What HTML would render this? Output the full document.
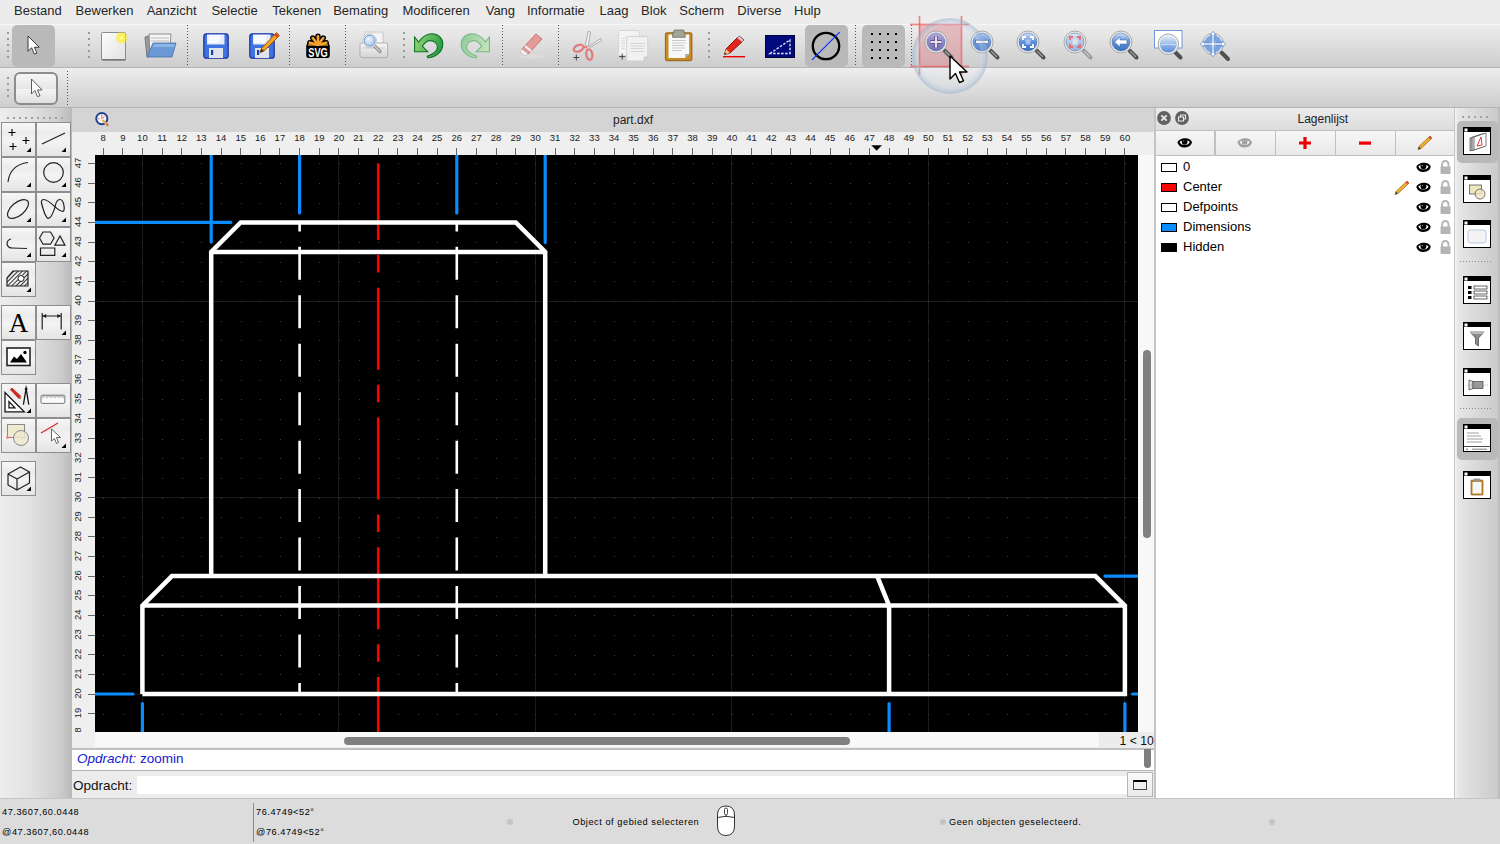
<!DOCTYPE html><html><head><meta charset="utf-8"><style>
html,body{margin:0;padding:0;width:1500px;height:844px;overflow:hidden;background:#ececec;font-family:"Liberation Sans", sans-serif;position:relative}
</style></head><body><div style="position:absolute;left:0px;top:0px;width:1500px;height:24px;background:#ececec"></div><div style="position:absolute;left:14px;top:4px;font-size:13px;line-height:13px;color:#262626;white-space:nowrap;">Bestand</div><div style="position:absolute;left:75.6px;top:4px;font-size:13px;line-height:13px;color:#262626;white-space:nowrap;">Bewerken</div><div style="position:absolute;left:146.7px;top:4px;font-size:13px;line-height:13px;color:#262626;white-space:nowrap;">Aanzicht</div><div style="position:absolute;left:211.4px;top:4px;font-size:13px;line-height:13px;color:#262626;white-space:nowrap;">Selectie</div><div style="position:absolute;left:272.2px;top:4px;font-size:13px;line-height:13px;color:#262626;white-space:nowrap;">Tekenen</div><div style="position:absolute;left:333.2px;top:4px;font-size:13px;line-height:13px;color:#262626;white-space:nowrap;">Bemating</div><div style="position:absolute;left:402.5px;top:4px;font-size:13px;line-height:13px;color:#262626;white-space:nowrap;">Modificeren</div><div style="position:absolute;left:485.7px;top:4px;font-size:13px;line-height:13px;color:#262626;white-space:nowrap;">Vang</div><div style="position:absolute;left:527px;top:4px;font-size:13px;line-height:13px;color:#262626;white-space:nowrap;">Informatie</div><div style="position:absolute;left:599.5px;top:4px;font-size:13px;line-height:13px;color:#262626;white-space:nowrap;">Laag</div><div style="position:absolute;left:641.1px;top:4px;font-size:13px;line-height:13px;color:#262626;white-space:nowrap;">Blok</div><div style="position:absolute;left:679.3px;top:4px;font-size:13px;line-height:13px;color:#262626;white-space:nowrap;">Scherm</div><div style="position:absolute;left:737.3px;top:4px;font-size:13px;line-height:13px;color:#262626;white-space:nowrap;">Diverse</div><div style="position:absolute;left:794px;top:4px;font-size:13px;line-height:13px;color:#262626;white-space:nowrap;">Hulp</div><div style="position:absolute;left:0px;top:24px;width:1500px;height:44px;background:linear-gradient(#ededed,#e2e2e2 35%,#cdcdcd);border-top:1px solid #f6f6f6;box-sizing:border-box;border-bottom:1px solid #b6b6b6"></div><div style="position:absolute;left:0px;top:68px;width:1500px;height:40px;background:linear-gradient(#eeeeee,#e2e2e2 35%,#cecece);box-sizing:border-box;border-bottom:1px solid #b4b4b4"></div><div style="position:absolute;left:7px;top:32px;width:2px;height:2px;background:#999"></div><div style="position:absolute;left:7px;top:38px;width:2px;height:2px;background:#999"></div><div style="position:absolute;left:7px;top:44px;width:2px;height:2px;background:#999"></div><div style="position:absolute;left:7px;top:50px;width:2px;height:2px;background:#999"></div><div style="position:absolute;left:7px;top:56px;width:2px;height:2px;background:#999"></div><div style="position:absolute;left:12px;top:25px;width:43px;height:42px;background:#b9b9b9;border-radius:5px"></div><svg style="position:absolute;left:27.5px;top:35.5px;overflow:visible" width="14" height="22" viewBox="0 0 14 22"><g transform="scale(0.9)"><path d="M0 0 L0 17 L4 13 L7 20 L10 19 L7 12.5 L12.5 12.5 Z" fill="#fff" stroke="#3a3a3a" stroke-width="1.1" stroke-linejoin="round"/></g></svg><div style="position:absolute;left:88px;top:32px;width:2px;height:2px;background:#999"></div><div style="position:absolute;left:88px;top:38px;width:2px;height:2px;background:#999"></div><div style="position:absolute;left:88px;top:44px;width:2px;height:2px;background:#999"></div><div style="position:absolute;left:88px;top:50px;width:2px;height:2px;background:#999"></div><div style="position:absolute;left:88px;top:56px;width:2px;height:2px;background:#999"></div><svg style="position:absolute;left:100px;top:31px;overflow:visible" width="28" height="30" viewBox="0 0 28 30"><defs><linearGradient id="nd" x1="0" y1="0" x2="1" y2="1"><stop offset="0" stop-color="#fdfdfd"/><stop offset="1" stop-color="#e2e2e2"/></linearGradient><radialGradient id="glow"><stop offset="0" stop-color="#ffffe0"/><stop offset="0.35" stop-color="#fff23a"/><stop offset="1" stop-color="#f5e800" stop-opacity="0"/></radialGradient></defs><rect x="1.5" y="1.5" width="24" height="27.5" rx="1" fill="url(#nd)" stroke="#8c8c8c" stroke-width="1"/><rect x="2" y="28" width="23.5" height="1.5" fill="#777"/><circle cx="21.7" cy="6.7" r="7" fill="url(#glow)"/></svg><svg style="position:absolute;left:143px;top:31px;overflow:visible" width="34" height="28" viewBox="0 0 34 28"><path d="M2 6 L9 4 L10 24 L4 26 Z" fill="#9a9a9a" stroke="#666" stroke-width="0.8"/><path d="M6 3 L28 3 L27 16 L7 22 Z" fill="#f4f4f4" stroke="#777" stroke-width="0.8"/><path d="M8 7 L26 7 M8 10 L26 10" stroke="#bbb" stroke-width="1"/><path d="M10 12 L33 12 L29 26 L4 26 Z" fill="#6b98d6" stroke="#4a70a8" stroke-width="0.8"/><path d="M11 13 L32 13 L31 16 L10 16 Z" fill="#8db4e6"/></svg><div style="position:absolute;left:187px;top:25px;width:1px;height:41px;background:repeating-linear-gradient(#555 0 1px,transparent 1px 3px)"></div><svg style="position:absolute;left:202.5px;top:32.5px;overflow:visible" width="26" height="26" viewBox="0 0 26 26"><rect x="0.8" y="0.8" width="24.4" height="24.4" rx="2.5" fill="#3e73e0" stroke="#1d2f9e" stroke-width="1.2"/><rect x="4" y="1.5" width="17.5" height="10" fill="#e4ecfb"/><path d="M6 2 L18 2 L16 10 L5 10 Z" fill="#f7f9ff"/><rect x="6" y="15" width="14" height="10" fill="#dfe3ea"/><rect x="8" y="17" width="2.2" height="5" fill="#1d3fb0"/></svg><svg style="position:absolute;left:248.5px;top:32.5px;overflow:visible" width="26" height="26" viewBox="0 0 26 26"><rect x="0.8" y="0.8" width="24.4" height="24.4" rx="2.5" fill="#3e73e0" stroke="#1d2f9e" stroke-width="1.2"/><rect x="4" y="1.5" width="17.5" height="10" fill="#e4ecfb"/><path d="M6 2 L18 2 L16 10 L5 10 Z" fill="#f7f9ff"/><rect x="6" y="15" width="14" height="10" fill="#dfe3ea"/><rect x="8" y="17" width="2.2" height="5" fill="#1d3fb0"/></svg><svg style="position:absolute;left:256px;top:30px;overflow:visible" width="24" height="26" viewBox="0 0 24 26"><path d="M20.5 2.5 L23.5 5.5 L8 21 L4 22.5 L5.5 18.5 Z" fill="#f2a51e" stroke="#a5530a" stroke-width="1"/><path d="M19 4 L22 7" stroke="#e0402a" stroke-width="2.5"/><path d="M4 22.5 L5.5 18.5 L8 21 Z" fill="#333"/></svg><div style="position:absolute;left:289px;top:25px;width:1px;height:41px;background:repeating-linear-gradient(#555 0 1px,transparent 1px 3px)"></div><svg style="position:absolute;left:306px;top:33px;overflow:visible" width="24" height="26" viewBox="0 0 24 26"><g stroke="#000" stroke-width="5.4" stroke-linecap="round"><path d="M12 11.7 L12 3.2" transform="rotate(-76 12 11.7)"/><path d="M12 11.7 L12 3.2" transform="rotate(-38 12 11.7)"/><path d="M12 11.7 L12 3.2" transform="rotate(0 12 11.7)"/><path d="M12 11.7 L12 3.2" transform="rotate(38 12 11.7)"/><path d="M12 11.7 L12 3.2" transform="rotate(76 12 11.7)"/></g><rect x="0.2" y="10.3" width="23.6" height="14.8" rx="3.2" fill="#000"/><g stroke="#f7a52b" stroke-width="2.6" stroke-linecap="round"><path d="M12 11.7 L12 3.2" transform="rotate(-76 12 11.7)"/><path d="M12 11.7 L12 3.2" transform="rotate(-38 12 11.7)"/><path d="M12 11.7 L12 3.2" transform="rotate(0 12 11.7)"/><path d="M12 11.7 L12 3.2" transform="rotate(38 12 11.7)"/><path d="M12 11.7 L12 3.2" transform="rotate(76 12 11.7)"/></g><rect x="2" y="11.3" width="20" height="1.3" fill="#f7a52b"/><text transform="translate(12 23.8) scale(0.7 1)" text-anchor="middle" font-family="Liberation Sans" font-weight="bold" font-size="13.2" fill="#fff">SVG</text></svg><div style="position:absolute;left:345px;top:25px;width:1px;height:41px;background:repeating-linear-gradient(#555 0 1px,transparent 1px 3px)"></div><svg style="position:absolute;left:359px;top:31px;overflow:visible" width="31" height="29" viewBox="0 0 31 29"><defs><linearGradient id="pb" x1="0" y1="0" x2="0" y2="1"><stop offset="0" stop-color="#f8f8f8"/><stop offset="1" stop-color="#d2d2d2"/></linearGradient><radialGradient id="pl" cx="0.4" cy="0.35" r="0.7"><stop offset="0" stop-color="#f2f6fc"/><stop offset="1" stop-color="#a7c3e8"/></radialGradient></defs><rect x="5.7" y="1" width="18.6" height="14" rx="1" fill="#ececec" stroke="#c8c8c8" stroke-width="0.8"/><rect x="10" y="3" width="12" height="10" fill="#f6f6f6"/><path d="M1 14 Q1 12 3 12 L26.7 12 Q28.7 12 28.7 14 L28.7 24.5 Q28.7 26.7 26.5 26.7 L3.2 26.7 Q1 26.7 1 24.5 Z" fill="url(#pb)" stroke="#a8a8a8" stroke-width="0.9"/><path d="M3 17 H26" stroke="#c4c4c4" stroke-width="0.8"/><path d="M14.5 14 L21 20.5" stroke="#8a8a8a" stroke-width="3.2" stroke-linecap="round"/><path d="M14.5 14 L21 20.5" stroke="#d0d0d0" stroke-width="1.2" stroke-linecap="round"/><circle cx="10.7" cy="9.7" r="6.8" fill="#f4f4f4" stroke="#c0c0c0" stroke-width="0.8"/><circle cx="10.7" cy="9.7" r="5.4" fill="url(#pl)" stroke="#5c8fd0" stroke-width="0.9"/></svg><div style="position:absolute;left:403px;top:32px;width:2px;height:2px;background:#999"></div><div style="position:absolute;left:403px;top:38px;width:2px;height:2px;background:#999"></div><div style="position:absolute;left:403px;top:44px;width:2px;height:2px;background:#999"></div><div style="position:absolute;left:403px;top:50px;width:2px;height:2px;background:#999"></div><div style="position:absolute;left:403px;top:56px;width:2px;height:2px;background:#999"></div><svg style="position:absolute;left:413px;top:32px;overflow:visible" width="32" height="28" viewBox="0 0 32 28"><defs><linearGradient id="ug" x1="0" y1="0" x2="1" y2="0.3"><stop offset="0" stop-color="#9bd97a"/><stop offset="1" stop-color="#2f9e45"/></linearGradient></defs><path d="M1.6 5 L5.5 10.1 C9 5 14 1.7 19 1.7 C25 1.7 29.8 6 29.8 12.2 C29.8 20 22 25.7 14.8 25.7 L14.2 24.2 C20 22 24.4 18.5 24.4 15.2 C24.4 11 21 8.6 17.2 8.6 C14 8.6 11.5 11 9.4 14.3 L14.8 19.7 L1.6 19.7 Z" fill="url(#ug)" stroke="#0b7326" stroke-width="1.1" stroke-linejoin="miter"/></svg><svg style="position:absolute;left:460px;top:32px;overflow:visible" width="32" height="28" viewBox="0 0 32 28"><defs><linearGradient id="rg" x1="1" y1="0" x2="0" y2="0.3"><stop offset="0" stop-color="#8dca97"/><stop offset="1" stop-color="#c2e4b9"/></linearGradient></defs><g transform="translate(31 0) scale(-1 1)"><path d="M1.6 5 L5.5 10.1 C9 5 14 1.7 19 1.7 C25 1.7 29.8 6 29.8 12.2 C29.8 20 22 25.7 14.8 25.7 L14.2 24.2 C20 22 24.4 18.5 24.4 15.2 C24.4 11 21 8.6 17.2 8.6 C14 8.6 11.5 11 9.4 14.3 L14.8 19.7 L1.6 19.7 Z" fill="url(#rg)" stroke="#79b886" stroke-width="1.1"/></g></svg><div style="position:absolute;left:502px;top:25px;width:1px;height:41px;background:repeating-linear-gradient(#555 0 1px,transparent 1px 3px)"></div><svg style="position:absolute;left:516px;top:32px;overflow:visible" width="30" height="28" viewBox="0 0 30 28"><ellipse cx="16" cy="24.5" rx="12" ry="1.8" fill="#ddd"/><path d="M20 2 L26 7 L12 22 L6 17 Z" fill="#e59a9a" stroke="#c96f6f" stroke-width="1"/><path d="M9 14 L15 19" stroke="#f5f5f5" stroke-width="2"/><path d="M6 17 L12 22 L9 24 L4 20 Z" fill="#f3f3f3" stroke="#bbb" stroke-width="0.8"/></svg><div style="position:absolute;left:558px;top:25px;width:1px;height:41px;background:repeating-linear-gradient(#555 0 1px,transparent 1px 3px)"></div><svg style="position:absolute;left:572px;top:30px;overflow:visible" width="30" height="31" viewBox="0 0 30 31"><path d="M13.2 15.5 L16.2 1.5 L18.6 2 L16 16.5 Z" fill="#f4f4f4" stroke="#9a9a9a" stroke-width="0.8"/><path d="M16.5 16.5 L28.8 8.5 L29.4 10.8 L17.5 17.5 Z" fill="#f4f4f4" stroke="#9a9a9a" stroke-width="0.8"/><ellipse cx="6.6" cy="18.2" rx="5" ry="3.1" transform="rotate(-22 6.6 18.2)" fill="none" stroke="#e27c7c" stroke-width="2.3"/><path d="M11 16.8 L15 17.5" stroke="#e27c7c" stroke-width="2.2"/><ellipse cx="17.3" cy="24.6" rx="3" ry="5.2" transform="rotate(-8 17.3 24.6)" fill="none" stroke="#e27c7c" stroke-width="2.3"/><path d="M1.3 27.5 H7.3 M4.3 24.5 V30.5" stroke="#444" stroke-width="1"/></svg><svg style="position:absolute;left:617px;top:30px;overflow:visible" width="33" height="33" viewBox="0 0 33 33"><rect x="1.6" y="0.5" width="20.7" height="25.2" rx="1.2" fill="#f3f3f3" stroke="#d2d2d2" stroke-width="0.9"/><path d="M4.5 8.5 H8 M4.5 11 H8 M4.5 13.5 H8 M4.5 16 H8 M4.5 18.5 H8" stroke="#dadada" stroke-width="1"/><path d="M11 6.4 H29.5 Q30.8 6.4 30.8 7.8 V27 L27 31 H11 Q9.7 31 9.7 29.6 V7.8 Q9.7 6.4 11 6.4 Z" fill="#f1f1f1" stroke="#cdcdcd" stroke-width="0.9"/><path d="M27 31 V27.5 Q27 27 27.5 27 H30.8 Z" fill="#d8d8d8" stroke="#bdbdbd" stroke-width="0.6"/><path d="M13.5 13.5 H28 M13.5 16 H28 M13.5 18.5 H27 M13.5 21.5 H28" stroke="#d6d6d6" stroke-width="1"/><path d="M2.2 26.6 H8.2 M5.2 23.6 V29.6" stroke="#444" stroke-width="1"/></svg><svg style="position:absolute;left:664px;top:29px;overflow:visible" width="30" height="33" viewBox="0 0 30 33"><rect x="1.4" y="3.8" width="26.5" height="27.9" rx="1.3" fill="#c88a22" stroke="#8a5a10" stroke-width="0.9"/><path d="M4.5 5.5 H25.2 V25 L21.2 29 H4.5 Z" fill="#f8f8f8"/><path d="M21.2 29 V25.5 Q21.2 25 21.7 25 H25.2 Z" fill="#a8a8a8"/><path d="M8 11.5 H21.5 M8 14 H21.5 M8 16.5 H20 M8 19 H21.5 M8 21.5 H18" stroke="#c8c8c8" stroke-width="1"/><path d="M10.8 1 H19 Q20.2 1 20.2 2.2 V4 H21.2 V8.3 H8.6 V4 H9.6 V2.2 Q9.6 1 10.8 1 Z" fill="#a3a396" stroke="#6e6e64" stroke-width="0.8"/></svg><div style="position:absolute;left:708px;top:32px;width:2px;height:2px;background:#999"></div><div style="position:absolute;left:708px;top:38px;width:2px;height:2px;background:#999"></div><div style="position:absolute;left:708px;top:44px;width:2px;height:2px;background:#999"></div><div style="position:absolute;left:708px;top:50px;width:2px;height:2px;background:#999"></div><div style="position:absolute;left:708px;top:56px;width:2px;height:2px;background:#999"></div><svg style="position:absolute;left:722px;top:33px;overflow:visible" width="25" height="26" viewBox="0 0 25 26"><path d="M17 3 L22 7 L8 20 L2.5 21.5 L4 16 Z" fill="#e3261b" stroke="#8c0f0a" stroke-width="1"/><path d="M16 4 L21 8" stroke="#ccc" stroke-width="2.6"/><path d="M2.5 21.5 L4 16 L8 20 Z" fill="#f0c896"/><path d="M2.5 21.5 L3 19.5 L4.5 21 Z" fill="#222"/><rect x="1" y="23" width="22" height="1.4" fill="#e80000"/></svg><svg style="position:absolute;left:765px;top:35px;overflow:visible" width="30" height="23" viewBox="0 0 30 23"><rect x="0.5" y="0.5" width="29" height="22" fill="#000a7d" stroke="#00043c" stroke-width="1"/><path d="M5 18.5 L25 5 L25 18.5 Z" fill="none" stroke="#e8e8ff" stroke-width="1.3" stroke-dasharray="2.5 1.5"/></svg><div style="position:absolute;left:805px;top:25px;width:43px;height:42px;background:#b9b9b9;border-radius:5px"></div><svg style="position:absolute;left:810px;top:29px;overflow:visible" width="32" height="32" viewBox="0 0 32 32"><circle cx="16" cy="17" r="13.2" fill="none" stroke="#000" stroke-width="2.3"/><path d="M2 30.9 L29.7 3.1" stroke="#1030ff" stroke-width="1.2"/></svg><div style="position:absolute;left:855px;top:25px;width:1px;height:41px;background:repeating-linear-gradient(#555 0 1px,transparent 1px 3px)"></div><div style="position:absolute;left:862px;top:25px;width:43px;height:42px;background:#b9b9b9;border-radius:5px"></div><div style="position:absolute;left:870.5px;top:32.7px;width:2px;height:2px;background:#000"></div><div style="position:absolute;left:878.5px;top:32.7px;width:2px;height:2px;background:#000"></div><div style="position:absolute;left:886.5px;top:32.7px;width:2px;height:2px;background:#000"></div><div style="position:absolute;left:894.5px;top:32.7px;width:2px;height:2px;background:#000"></div><div style="position:absolute;left:870.5px;top:40.7px;width:2px;height:2px;background:#000"></div><div style="position:absolute;left:878.5px;top:40.7px;width:2px;height:2px;background:#000"></div><div style="position:absolute;left:886.5px;top:40.7px;width:2px;height:2px;background:#000"></div><div style="position:absolute;left:894.5px;top:40.7px;width:2px;height:2px;background:#000"></div><div style="position:absolute;left:870.5px;top:48.7px;width:2px;height:2px;background:#000"></div><div style="position:absolute;left:878.5px;top:48.7px;width:2px;height:2px;background:#000"></div><div style="position:absolute;left:886.5px;top:48.7px;width:2px;height:2px;background:#000"></div><div style="position:absolute;left:894.5px;top:48.7px;width:2px;height:2px;background:#000"></div><div style="position:absolute;left:870.5px;top:56.7px;width:2px;height:2px;background:#000"></div><div style="position:absolute;left:878.5px;top:56.7px;width:2px;height:2px;background:#000"></div><div style="position:absolute;left:886.5px;top:56.7px;width:2px;height:2px;background:#000"></div><div style="position:absolute;left:894.5px;top:56.7px;width:2px;height:2px;background:#000"></div><div style="position:absolute;left:911px;top:25px;width:1px;height:41px;background:repeating-linear-gradient(#555 0 1px,transparent 1px 3px)"></div><div style="position:absolute;left:919px;top:24.5px;width:42px;height:42px;background:rgba(230,120,125,0.42)"></div><svg style="position:absolute;left:923px;top:28.5px;overflow:visible" width="34" height="34" viewBox="0 0 34 34"><defs><linearGradient id="lg936" x1="0" y1="0" x2="0" y2="1"><stop offset="0" stop-color="#b3a8dc"/><stop offset="0.5" stop-color="#8a80c4"/><stop offset="1" stop-color="#6f68b0"/></linearGradient></defs><path d="M21.5 21.5 L28.5 28.5" stroke="#505050" stroke-width="4" stroke-linecap="round"/><path d="M22.5 22.5 L27.5 27.5" stroke="#a0a0a0" stroke-width="1.2" stroke-linecap="round"/><circle cx="13" cy="13" r="11" fill="#ececec" stroke="#a0a0a0" stroke-width="0.9"/><circle cx="13" cy="13" r="9" fill="url(#lg936)" stroke="#4a6a9a" stroke-width="0.5"/><g transform="translate(1 1)"><path d="M12 6.5 V17.5 M6.5 12 H17.5" stroke="#3a3a80" stroke-width="3.6"/><path d="M12 6.5 V17.5 M6.5 12 H17.5" stroke="#f6dde6" stroke-width="2.2"/></g></svg><svg style="position:absolute;left:969px;top:28.5px;overflow:visible" width="34" height="34" viewBox="0 0 34 34"><defs><linearGradient id="lg982" x1="0" y1="0" x2="0" y2="1"><stop offset="0" stop-color="#a9c8f0"/><stop offset="0.5" stop-color="#6b9be0"/><stop offset="1" stop-color="#4c80d0"/></linearGradient></defs><path d="M21.5 21.5 L28.5 28.5" stroke="#505050" stroke-width="4" stroke-linecap="round"/><path d="M22.5 22.5 L27.5 27.5" stroke="#a0a0a0" stroke-width="1.2" stroke-linecap="round"/><circle cx="13" cy="13" r="11" fill="#ececec" stroke="#a0a0a0" stroke-width="0.9"/><circle cx="13" cy="13" r="9" fill="url(#lg982)" stroke="#4a6a9a" stroke-width="0.5"/><g transform="translate(1 1)"><rect x="5.5" y="10.2" width="13" height="3.4" fill="#fff" stroke="#3a5f98" stroke-width="0.7"/></g></svg><svg style="position:absolute;left:1015px;top:28.5px;overflow:visible" width="34" height="34" viewBox="0 0 34 34"><defs><linearGradient id="lg1028" x1="0" y1="0" x2="0" y2="1"><stop offset="0" stop-color="#cfe0f7"/><stop offset="0.5" stop-color="#5d8fd8"/><stop offset="1" stop-color="#3a6fc0"/></linearGradient></defs><path d="M21.5 21.5 L28.5 28.5" stroke="#505050" stroke-width="4" stroke-linecap="round"/><path d="M22.5 22.5 L27.5 27.5" stroke="#a0a0a0" stroke-width="1.2" stroke-linecap="round"/><circle cx="13" cy="13" r="11" fill="#ececec" stroke="#a0a0a0" stroke-width="0.9"/><circle cx="13" cy="13" r="9" fill="url(#lg1028)" stroke="#4a6a9a" stroke-width="0.5"/><g transform="translate(1 1)"><path d="M7 10 V7 H10 M14 7 H17 V10 M17 14 V17 H14 M10 17 H7 V14" fill="none" stroke="#fff" stroke-width="1.8"/><rect x="9.5" y="9.5" width="5" height="5" fill="#cfe0f7" opacity="0.6"/></g></svg><svg style="position:absolute;left:1062px;top:28.5px;overflow:visible" width="34" height="34" viewBox="0 0 34 34"><defs><linearGradient id="lg1075" x1="0" y1="0" x2="0" y2="1"><stop offset="0" stop-color="#dbe5f4"/><stop offset="0.5" stop-color="#b4c6e4"/><stop offset="1" stop-color="#9bb4dc"/></linearGradient></defs><path d="M21.5 21.5 L28.5 28.5" stroke="#9a9a9a" stroke-width="4" stroke-linecap="round"/><path d="M22.5 22.5 L27.5 27.5" stroke="#c8c8c8" stroke-width="1.2" stroke-linecap="round"/><circle cx="13" cy="13" r="11" fill="#ececec" stroke="#a0a0a0" stroke-width="0.9"/><circle cx="13" cy="13" r="9" fill="url(#lg1075)" stroke="#4a6a9a" stroke-width="0.5"/><g transform="translate(1 1)"><path d="M7 10 V7 H10 M14 7 H17 V10 M17 14 V17 H14 M10 17 H7 V14" fill="none" stroke="#e86a6a" stroke-width="1.8"/><rect x="9.5" y="9.5" width="5" height="5" fill="#dde4f0"/></g></svg><svg style="position:absolute;left:1108px;top:28.5px;overflow:visible" width="34" height="34" viewBox="0 0 34 34"><defs><linearGradient id="lg1121" x1="0" y1="0" x2="0" y2="1"><stop offset="0" stop-color="#cfe0f7"/><stop offset="0.5" stop-color="#5d8fd8"/><stop offset="1" stop-color="#3a6fc0"/></linearGradient></defs><path d="M21.5 21.5 L28.5 28.5" stroke="#505050" stroke-width="4" stroke-linecap="round"/><path d="M22.5 22.5 L27.5 27.5" stroke="#a0a0a0" stroke-width="1.2" stroke-linecap="round"/><circle cx="13" cy="13" r="11" fill="#ececec" stroke="#a0a0a0" stroke-width="0.9"/><circle cx="13" cy="13" r="9" fill="url(#lg1121)" stroke="#4a6a9a" stroke-width="0.5"/><g transform="translate(1 1)"><path d="M5.5 12 L11 7 V10 H18 V14 H11 V17 Z" fill="#fff" stroke="#4a6fa8" stroke-width="0.6"/></g></svg><svg style="position:absolute;left:1152px;top:29px;overflow:visible" width="34" height="32" viewBox="0 0 34 32"><defs><linearGradient id="zw" x1="0" y1="0" x2="0" y2="1"><stop offset="0" stop-color="#e4edf9"/><stop offset="0.55" stop-color="#8fb4ea"/><stop offset="1" stop-color="#5a8ad6"/></linearGradient></defs><rect x="2.5" y="1.5" width="27.5" height="17.5" fill="#fff" stroke="#7097d8" stroke-width="1"/><path d="M22 22 L28.5 28.5" stroke="#505050" stroke-width="4" stroke-linecap="round"/><circle cx="16.3" cy="15.2" r="10.3" fill="#ececec" stroke="#a0a0a0" stroke-width="0.9"/><circle cx="16.3" cy="15.2" r="8.4" fill="url(#zw)"/><path d="M8.5 16 Q16.3 14 24 16" stroke="#d6e4f6" stroke-width="1" fill="none"/></svg><svg style="position:absolute;left:1197px;top:27.5px;overflow:visible" width="34" height="34" viewBox="0 0 34 34"><path d="M24.5 24.5 L31 31" stroke="#505050" stroke-width="4" stroke-linecap="round"/><circle cx="16" cy="16" r="10.5" fill="#ececec" stroke="#a0a0a0" stroke-width="0.9"/><circle cx="16" cy="16" r="9" fill="#79a4e2"/><circle cx="16" cy="16" r="3.5" fill="#a9c6ee"/><path d="M16 3.3 L19 6.8 H17.1 V14.9 H25.2 V13 L28.7 16 L25.2 19 V17.1 H17.1 V25.2 H19 L16 28.7 L13 25.2 H14.9 V17.1 H6.8 V19 L3.3 16 L6.8 13 V14.9 H14.9 V6.8 H13 Z" fill="#fff" stroke="#5a88cc" stroke-width="0.8"/></svg><div style="position:absolute;left:7px;top:77px;width:2px;height:2px;background:#999"></div><div style="position:absolute;left:7px;top:83px;width:2px;height:2px;background:#999"></div><div style="position:absolute;left:7px;top:89px;width:2px;height:2px;background:#999"></div><div style="position:absolute;left:7px;top:95px;width:2px;height:2px;background:#999"></div><div style="position:absolute;left:14px;top:72px;width:44px;height:33px;background:linear-gradient(#f6f6f6,#e6e6e6 50%,#f4f4f4 52%,#e0e0e0);border:2px solid #8c8c8c;border-radius:6px;box-sizing:border-box"></div><svg style="position:absolute;left:31px;top:79px;overflow:visible" width="14" height="22" viewBox="0 0 14 22"><g transform="translate(0.5 0) scale(0.85 0.88)"><path d="M0 0 L0 17 L4 13 L7 20 L10 19 L7 12.5 L12.5 12.5 Z" fill="#fff" stroke="#444" stroke-width="1" stroke-linejoin="round"/></g></svg><div style="position:absolute;left:67px;top:71px;width:1px;height:35px;background:repeating-linear-gradient(#555 0 1px,transparent 1px 3px)"></div><div style="position:absolute;left:0px;top:108px;width:70px;height:690px;background:linear-gradient(90deg,#ededed 0%,#e3e3e3 40%,#cdcdcd 85%,#bdbdbd 100%)"></div><div style="position:absolute;left:70px;top:108px;width:2px;height:690px;background:#bababa"></div><div style="position:absolute;left:7px;top:117px;width:57px;height:1px;background:repeating-linear-gradient(90deg,#9c9c9c 0 1px,transparent 1px 6px)"></div><div style="position:absolute;left:7px;top:116.5px;width:57px;height:2px;background:repeating-linear-gradient(90deg,#a0a0a0 0 2px,transparent 2px 6px)"></div><div style="position:absolute;left:1px;top:122px;width:35px;height:35px;background:linear-gradient(#f7f7f7,#ececec 30%,#f3f3f3 55%,#e4e4e4);border:1px solid #8e8e8e;box-sizing:border-box"></div><svg style="position:absolute;left:1px;top:122px;overflow:visible" width="35" height="35" viewBox="0 0 35 35"><path d="M7.5 10.5 H14.5 M11 7 V14 M21.5 18.5 H28.5 M25 15 V22 M8.5 24.5 H15.5 M12 21 V28" stroke="#000" stroke-width="1.1"/><path d="M30 25.5 L30 30 L25.5 30 Z" fill="#000"/></svg><div style="position:absolute;left:36px;top:122px;width:35px;height:35px;background:linear-gradient(#f7f7f7,#ececec 30%,#f3f3f3 55%,#e4e4e4);border:1px solid #8e8e8e;box-sizing:border-box"></div><svg style="position:absolute;left:36px;top:122px;overflow:visible" width="35" height="35" viewBox="0 0 35 35"><path d="M6 22 L29 11" stroke="#222" stroke-width="1.2" fill="none"/><path d="M30 25.5 L30 30 L25.5 30 Z" fill="#000"/></svg><div style="position:absolute;left:1px;top:157px;width:35px;height:35px;background:linear-gradient(#f7f7f7,#ececec 30%,#f3f3f3 55%,#e4e4e4);border:1px solid #8e8e8e;box-sizing:border-box"></div><svg style="position:absolute;left:1px;top:157px;overflow:visible" width="35" height="35" viewBox="0 0 35 35"><path d="M7 25 Q9 8 27 5.5" stroke="#222" stroke-width="1.2" fill="none"/><path d="M30 25.5 L30 30 L25.5 30 Z" fill="#000"/></svg><div style="position:absolute;left:36px;top:157px;width:35px;height:35px;background:linear-gradient(#f7f7f7,#ececec 30%,#f3f3f3 55%,#e4e4e4);border:1px solid #8e8e8e;box-sizing:border-box"></div><svg style="position:absolute;left:36px;top:157px;overflow:visible" width="35" height="35" viewBox="0 0 35 35"><circle cx="17.5" cy="15.5" r="9.8" stroke="#222" stroke-width="1.2" fill="none"/><path d="M30 25.5 L30 30 L25.5 30 Z" fill="#000"/></svg><div style="position:absolute;left:1px;top:192px;width:35px;height:35px;background:linear-gradient(#f7f7f7,#ececec 30%,#f3f3f3 55%,#e4e4e4);border:1px solid #8e8e8e;box-sizing:border-box"></div><svg style="position:absolute;left:1px;top:192px;overflow:visible" width="35" height="35" viewBox="0 0 35 35"><ellipse cx="17" cy="17" rx="12.5" ry="6.5" transform="rotate(-40 17 17)" stroke="#222" stroke-width="1.2" fill="none"/><path d="M30 25.5 L30 30 L25.5 30 Z" fill="#000"/></svg><div style="position:absolute;left:36px;top:192px;width:35px;height:35px;background:linear-gradient(#f7f7f7,#ececec 30%,#f3f3f3 55%,#e4e4e4);border:1px solid #8e8e8e;box-sizing:border-box"></div><svg style="position:absolute;left:36px;top:192px;overflow:visible" width="35" height="35" viewBox="0 0 35 35"><path d="M7.7 7.5 C11 7.5 15 11 19.1 14.9 C22 17.5 25 19.5 27 19.3 C29.5 19 28 7.5 24 7.5 C21 7.5 19.5 12 19.1 14.9 C17.5 20 15 26.3 12.4 26.3 C9.5 26.3 7 17 5.5 11 C5 9 6 7.5 7.7 7.5 Z" stroke="#222" stroke-width="1.2" fill="none"/><path d="M30 25.5 L30 30 L25.5 30 Z" fill="#000"/></svg><div style="position:absolute;left:1px;top:227px;width:35px;height:35px;background:linear-gradient(#f7f7f7,#ececec 30%,#f3f3f3 55%,#e4e4e4);border:1px solid #8e8e8e;box-sizing:border-box"></div><svg style="position:absolute;left:1px;top:227px;overflow:visible" width="35" height="35" viewBox="0 0 35 35"><path d="M10 12 Q6 13 6 17 Q7 21 11 21 L26 21.5" stroke="#222" stroke-width="1.2" fill="none"/><path d="M30 25.5 L30 30 L25.5 30 Z" fill="#000"/></svg><div style="position:absolute;left:36px;top:227px;width:35px;height:35px;background:linear-gradient(#f7f7f7,#ececec 30%,#f3f3f3 55%,#e4e4e4);border:1px solid #8e8e8e;box-sizing:border-box"></div><svg style="position:absolute;left:36px;top:227px;overflow:visible" width="35" height="35" viewBox="0 0 35 35"><path d="M3.5 11 L7 5 L14.5 5 L18 11 L14.5 17.2 L7 17.2 Z M18.8 18.2 L24 9 L29 18.2 Z M4.5 21 H18.8 V28.3 H4.5 Z" stroke="#222" stroke-width="1.2" fill="none"/><path d="M30 25.5 L30 30 L25.5 30 Z" fill="#000"/></svg><div style="position:absolute;left:1px;top:262px;width:35px;height:35px;background:linear-gradient(#f7f7f7,#ececec 30%,#f3f3f3 55%,#e4e4e4);border:1px solid #8e8e8e;box-sizing:border-box"></div><svg style="position:absolute;left:1px;top:262px;overflow:visible" width="35" height="35" viewBox="0 0 35 35"><defs><pattern id="hp" width="3" height="3" patternUnits="userSpaceOnUse" patternTransform="rotate(45)"><rect width="1" height="3" fill="#333"/></pattern></defs><path d="M6 16 L12 9 H27 V24 H6 Z" fill="url(#hp)" stroke="#222" stroke-width="1.2"/><circle cx="20" cy="16.5" r="3" fill="#fff" stroke="#222" stroke-width="1"/><path d="M30 25.5 L30 30 L25.5 30 Z" fill="#000"/></svg><div style="position:absolute;left:1px;top:305px;width:35px;height:35px;background:linear-gradient(#f7f7f7,#ececec 30%,#f3f3f3 55%,#e4e4e4);border:1px solid #8e8e8e;box-sizing:border-box"></div><svg style="position:absolute;left:1px;top:305px;overflow:visible" width="35" height="35" viewBox="0 0 35 35"><text x="17.5" y="27" text-anchor="middle" font-family="Liberation Serif" font-size="27" fill="#000">A</text></svg><div style="position:absolute;left:36px;top:305px;width:35px;height:35px;background:linear-gradient(#f7f7f7,#ececec 30%,#f3f3f3 55%,#e4e4e4);border:1px solid #8e8e8e;box-sizing:border-box"></div><svg style="position:absolute;left:36px;top:305px;overflow:visible" width="35" height="35" viewBox="0 0 35 35"><path d="M6.2 8 V24.4 M25.2 8 V24.4 M6.2 11 H25.2" stroke="#222" stroke-width="1.2" fill="none"/><path d="M6.2 11 L10.2 9 V13 Z M25.2 11 L21.2 9 V13 Z" fill="#222"/><path d="M30 25.5 L30 30 L25.5 30 Z" fill="#000"/></svg><div style="position:absolute;left:1px;top:340px;width:35px;height:35px;background:linear-gradient(#f7f7f7,#ececec 30%,#f3f3f3 55%,#e4e4e4);border:1px solid #8e8e8e;box-sizing:border-box"></div><svg style="position:absolute;left:1px;top:340px;overflow:visible" width="35" height="35" viewBox="0 0 35 35"><rect x="6" y="8" width="23" height="17.5" fill="#fff" stroke="#222" stroke-width="1.6"/><path d="M9 22.5 L13 16.5 L16 19 L20 14 L26 22.5 Z" fill="#000"/><circle cx="24" cy="12.5" r="1.7" fill="#000"/></svg><div style="position:absolute;left:1px;top:383px;width:35px;height:35px;background:linear-gradient(#f7f7f7,#ececec 30%,#f3f3f3 55%,#e4e4e4);border:1px solid #8e8e8e;box-sizing:border-box"></div><svg style="position:absolute;left:1px;top:383px;overflow:visible" width="35" height="35" viewBox="0 0 35 35"><path d="M4 9.6 V28.9 H23.3 Z M8 18.5 V24.9 H13.9 Z" fill="#fff" stroke="#111" stroke-width="1.25" stroke-linejoin="miter"/><path d="M9.3 6.6 L11 5 L19.8 13.2 L19.5 15.5 L17.6 15.3 Z" fill="#d8261c" stroke="#8a140e" stroke-width="0.6"/><path d="M17.6 15.3 L19.5 15.5 L19.8 13.2 Z" fill="#c89050"/><path d="M25.1 5.5 L22.4 21.7 M25.1 5.5 L27.8 21.7" stroke="#111" stroke-width="1.3" fill="none"/><circle cx="25.1" cy="6" r="1.4" fill="#111"/><path d="M25.1 2.8 V4.5" stroke="#111" stroke-width="1"/><path d="M30 25.5 L30 30 L25.5 30 Z" fill="#000"/></svg><div style="position:absolute;left:36px;top:383px;width:35px;height:35px;background:linear-gradient(#f7f7f7,#ececec 30%,#f3f3f3 55%,#e4e4e4);border:1px solid #8e8e8e;box-sizing:border-box"></div><svg style="position:absolute;left:36px;top:383px;overflow:visible" width="35" height="35" viewBox="0 0 35 35"><rect x="5" y="12.2" width="23.8" height="8.2" rx="1.2" fill="#fafafa" stroke="#666" stroke-width="0.9"/><path d="M7.0 12.6 V15.2M9.0 12.6 V14.2M11.0 12.6 V15.2M13.0 12.6 V14.2M15.0 12.6 V15.2M17.0 12.6 V14.2M19.0 12.6 V15.2M21.0 12.6 V14.2M23.0 12.6 V15.2M25.0 12.6 V14.2M27.0 12.6 V15.2" stroke="#555" stroke-width="0.6"/></svg><div style="position:absolute;left:1px;top:418px;width:35px;height:35px;background:linear-gradient(#f7f7f7,#ececec 30%,#f3f3f3 55%,#e4e4e4);border:1px solid #8e8e8e;box-sizing:border-box"></div><svg style="position:absolute;left:1px;top:418px;overflow:visible" width="35" height="35" viewBox="0 0 35 35"><rect x="6.5" y="6.5" width="17" height="13" fill="#efe9cf" stroke="#888" stroke-width="1"/><circle cx="20" cy="20" r="7.5" fill="#efe9cf" fill-opacity="0.85" stroke="#888" stroke-width="1"/><circle cx="6.5" cy="19.5" r="1.4" fill="#f08080"/></svg><div style="position:absolute;left:36px;top:418px;width:35px;height:35px;background:linear-gradient(#f7f7f7,#ececec 30%,#f3f3f3 55%,#e4e4e4);border:1px solid #8e8e8e;box-sizing:border-box"></div><svg style="position:absolute;left:36px;top:418px;overflow:visible" width="35" height="35" viewBox="0 0 35 35"><path d="M5 15 L22 5" stroke="#e8262e" stroke-width="1.3"/><path d="M15.5 11 V23 L18.5 20.5 L20.5 25.5 L22.5 24.5 L20.5 19.5 L24.5 19.5 Z" fill="#fff" stroke="#555" stroke-width="0.9"/><path d="M30 25.5 L30 30 L25.5 30 Z" fill="#000"/></svg><div style="position:absolute;left:1px;top:461px;width:35px;height:35px;background:linear-gradient(#f7f7f7,#ececec 30%,#f3f3f3 55%,#e4e4e4);border:1px solid #8e8e8e;box-sizing:border-box"></div><svg style="position:absolute;left:1px;top:461px;overflow:visible" width="35" height="35" viewBox="0 0 35 35"><path d="M7 13 L19.5 6 L28.5 11 L16 18 Z M7 13 V24 L16 29 V18 M28.5 11 V22 L16 29" fill="none" stroke="#222" stroke-width="1.2" stroke-linejoin="round"/><path d="M30 25.5 L30 30 L25.5 30 Z" fill="#000"/></svg><div style="position:absolute;left:72px;top:108px;width:1082px;height:24px;background:#d4d4d4"></div><div style="position:absolute;left:613px;top:114px;font-size:12px;line-height:12px;color:#222;white-space:nowrap;">part.dxf</div><svg style="position:absolute;left:94px;top:111px" width="17" height="17"><circle cx="7.8" cy="7.6" r="5.6" fill="#f2f2f2" stroke="#1f3f8f" stroke-width="1.9"/><path d="M7.8 3.5 V7.6 L10.5 5.5 M4 7.6 H5.5" stroke="#d04040" stroke-width="0.7" fill="none"/><path d="M8.5 9 L13 13.5" stroke="#e8b040" stroke-width="2.2"/><path d="M12.5 13 L14.2 14.7" stroke="#e06060" stroke-width="2.2"/></svg><div style="position:absolute;left:72px;top:132px;width:1082px;height:23px;background:#efefef"></div><div style="position:absolute;left:72px;top:155px;width:23px;height:592px;background:#efefef"></div><svg style="position:absolute;left:0;top:0" width="1500" height="844"><path d="M103.5 148V155M122.5 148V155M142.5 148V155M162.5 148V155M181.5 148V155M201.5 148V155M221.5 148V155M240.5 148V155M260.5 148V155M279.5 148V155M299.5 148V155M319.5 148V155M338.5 148V155M358.5 148V155M378.5 148V155M397.5 148V155M417.5 148V155M437.5 148V155M456.5 148V155M476.5 148V155M496.5 148V155M515.5 148V155M535.5 148V155M555.5 148V155M574.5 148V155M594.5 148V155M614.5 148V155M633.5 148V155M653.5 148V155M672.5 148V155M692.5 148V155M712.5 148V155M731.5 148V155M751.5 148V155M771.5 148V155M790.5 148V155M810.5 148V155M830.5 148V155M849.5 148V155M869.5 148V155M889.5 148V155M908.5 148V155M928.5 148V155M948.5 148V155M967.5 148V155M987.5 148V155M1006.5 148V155M1026.5 148V155M1046.5 148V155M1065.5 148V155M1085.5 148V155M1105.5 148V155M1124.5 148V155M88 713.5H95M88 694.5H95M88 674.5H95M88 654.5H95M88 635.5H95M88 615.5H95M88 595.5H95M88 576.5H95M88 556.5H95M88 536.5H95M88 517.5H95M88 497.5H95M88 477.5H95M88 458.5H95M88 438.5H95M88 418.5H95M88 399.5H95M88 379.5H95M88 359.5H95M88 340.5H95M88 320.5H95M88 301.5H95M88 281.5H95M88 261.5H95M88 242.5H95M88 222.5H95M88 202.5H95M88 183.5H95M88 163.5H95" stroke="#666" stroke-width="1"/><path d="M870.8 145 L882.4 145 L876.6 151 Z" fill="#000" stroke="#fff" stroke-width="0.6" stroke-opacity="0.8"/><defs><clipPath id="rl"><rect x="72" y="155" width="23" height="577"/></clipPath></defs><g font-family="Liberation Sans" font-size="9.5" fill="#222"><text x="103.1" y="140.7" text-anchor="middle">8</text><text x="122.8" y="140.7" text-anchor="middle">9</text><text x="142.4" y="140.7" text-anchor="middle">10</text><text x="162.1" y="140.7" text-anchor="middle">11</text><text x="181.7" y="140.7" text-anchor="middle">12</text><text x="201.3" y="140.7" text-anchor="middle">13</text><text x="221.0" y="140.7" text-anchor="middle">14</text><text x="240.7" y="140.7" text-anchor="middle">15</text><text x="260.3" y="140.7" text-anchor="middle">16</text><text x="279.9" y="140.7" text-anchor="middle">17</text><text x="299.6" y="140.7" text-anchor="middle">18</text><text x="319.2" y="140.7" text-anchor="middle">19</text><text x="338.9" y="140.7" text-anchor="middle">20</text><text x="358.5" y="140.7" text-anchor="middle">21</text><text x="378.2" y="140.7" text-anchor="middle">22</text><text x="397.9" y="140.7" text-anchor="middle">23</text><text x="417.5" y="140.7" text-anchor="middle">24</text><text x="437.1" y="140.7" text-anchor="middle">25</text><text x="456.8" y="140.7" text-anchor="middle">26</text><text x="476.4" y="140.7" text-anchor="middle">27</text><text x="496.1" y="140.7" text-anchor="middle">28</text><text x="515.8" y="140.7" text-anchor="middle">29</text><text x="535.4" y="140.7" text-anchor="middle">30</text><text x="555.0" y="140.7" text-anchor="middle">31</text><text x="574.7" y="140.7" text-anchor="middle">32</text><text x="594.4" y="140.7" text-anchor="middle">33</text><text x="614.0" y="140.7" text-anchor="middle">34</text><text x="633.6" y="140.7" text-anchor="middle">35</text><text x="653.3" y="140.7" text-anchor="middle">36</text><text x="672.9" y="140.7" text-anchor="middle">37</text><text x="692.6" y="140.7" text-anchor="middle">38</text><text x="712.2" y="140.7" text-anchor="middle">39</text><text x="731.9" y="140.7" text-anchor="middle">40</text><text x="751.5" y="140.7" text-anchor="middle">41</text><text x="771.2" y="140.7" text-anchor="middle">42</text><text x="790.8" y="140.7" text-anchor="middle">43</text><text x="810.5" y="140.7" text-anchor="middle">44</text><text x="830.1" y="140.7" text-anchor="middle">45</text><text x="849.8" y="140.7" text-anchor="middle">46</text><text x="869.4" y="140.7" text-anchor="middle">47</text><text x="889.1" y="140.7" text-anchor="middle">48</text><text x="908.7" y="140.7" text-anchor="middle">49</text><text x="928.4" y="140.7" text-anchor="middle">50</text><text x="948.0" y="140.7" text-anchor="middle">51</text><text x="967.7" y="140.7" text-anchor="middle">52</text><text x="987.3" y="140.7" text-anchor="middle">53</text><text x="1007.0" y="140.7" text-anchor="middle">54</text><text x="1026.6" y="140.7" text-anchor="middle">55</text><text x="1046.3" y="140.7" text-anchor="middle">56</text><text x="1066.0" y="140.7" text-anchor="middle">57</text><text x="1085.6" y="140.7" text-anchor="middle">58</text><text x="1105.2" y="140.7" text-anchor="middle">59</text><text x="1124.9" y="140.7" text-anchor="middle">60</text><g clip-path="url(#rl)"><text transform="translate(81.1 732.7) rotate(-90)" text-anchor="middle">18</text><text transform="translate(81.1 713.0) rotate(-90)" text-anchor="middle">19</text><text transform="translate(81.1 693.4) rotate(-90)" text-anchor="middle">20</text><text transform="translate(81.1 673.8) rotate(-90)" text-anchor="middle">21</text><text transform="translate(81.1 654.1) rotate(-90)" text-anchor="middle">22</text><text transform="translate(81.1 634.4) rotate(-90)" text-anchor="middle">23</text><text transform="translate(81.1 614.8) rotate(-90)" text-anchor="middle">24</text><text transform="translate(81.1 595.1) rotate(-90)" text-anchor="middle">25</text><text transform="translate(81.1 575.5) rotate(-90)" text-anchor="middle">26</text><text transform="translate(81.1 555.9) rotate(-90)" text-anchor="middle">27</text><text transform="translate(81.1 536.2) rotate(-90)" text-anchor="middle">28</text><text transform="translate(81.1 516.5) rotate(-90)" text-anchor="middle">29</text><text transform="translate(81.1 496.9) rotate(-90)" text-anchor="middle">30</text><text transform="translate(81.1 477.2) rotate(-90)" text-anchor="middle">31</text><text transform="translate(81.1 457.6) rotate(-90)" text-anchor="middle">32</text><text transform="translate(81.1 437.9) rotate(-90)" text-anchor="middle">33</text><text transform="translate(81.1 418.3) rotate(-90)" text-anchor="middle">34</text><text transform="translate(81.1 398.6) rotate(-90)" text-anchor="middle">35</text><text transform="translate(81.1 379.0) rotate(-90)" text-anchor="middle">36</text><text transform="translate(81.1 359.4) rotate(-90)" text-anchor="middle">37</text><text transform="translate(81.1 339.7) rotate(-90)" text-anchor="middle">38</text><text transform="translate(81.1 320.1) rotate(-90)" text-anchor="middle">39</text><text transform="translate(81.1 300.4) rotate(-90)" text-anchor="middle">40</text><text transform="translate(81.1 280.8) rotate(-90)" text-anchor="middle">41</text><text transform="translate(81.1 261.1) rotate(-90)" text-anchor="middle">42</text><text transform="translate(81.1 241.5) rotate(-90)" text-anchor="middle">43</text><text transform="translate(81.1 221.8) rotate(-90)" text-anchor="middle">44</text><text transform="translate(81.1 202.2) rotate(-90)" text-anchor="middle">45</text><text transform="translate(81.1 182.5) rotate(-90)" text-anchor="middle">46</text><text transform="translate(81.1 162.9) rotate(-90)" text-anchor="middle">47</text></g></g></svg><svg style="position:absolute;left:95px;top:155px" width="1043" height="577" viewBox="95 155 1043 577"><rect x="95" y="155" width="1043" height="577" fill="#000"/><line x1="142.5" y1="155" x2="142.5" y2="732" stroke="#1c1c1c" stroke-width="1"/><line x1="338.5" y1="155" x2="338.5" y2="732" stroke="#1c1c1c" stroke-width="1"/><line x1="535.5" y1="155" x2="535.5" y2="732" stroke="#1c1c1c" stroke-width="1"/><line x1="731.5" y1="155" x2="731.5" y2="732" stroke="#1c1c1c" stroke-width="1"/><line x1="928.5" y1="155" x2="928.5" y2="732" stroke="#1c1c1c" stroke-width="1"/><line x1="1124.5" y1="155" x2="1124.5" y2="732" stroke="#1c1c1c" stroke-width="1"/><line x1="95" y1="694.5" x2="1138" y2="694.5" stroke="#1c1c1c" stroke-width="1"/><line x1="95" y1="497.5" x2="1138" y2="497.5" stroke="#1c1c1c" stroke-width="1"/><line x1="95" y1="301.5" x2="1138" y2="301.5" stroke="#1c1c1c" stroke-width="1"/><path d="M103 714h1v1h-1zM103 694h1v1h-1zM103 674h1v1h-1zM103 655h1v1h-1zM103 635h1v1h-1zM103 615h1v1h-1zM103 596h1v1h-1zM103 576h1v1h-1zM103 556h1v1h-1zM103 537h1v1h-1zM103 517h1v1h-1zM103 498h1v1h-1zM103 478h1v1h-1zM103 458h1v1h-1zM103 439h1v1h-1zM103 419h1v1h-1zM103 399h1v1h-1zM103 380h1v1h-1zM103 360h1v1h-1zM103 340h1v1h-1zM103 321h1v1h-1zM103 301h1v1h-1zM103 281h1v1h-1zM103 262h1v1h-1zM103 242h1v1h-1zM103 222h1v1h-1zM103 203h1v1h-1zM103 183h1v1h-1zM103 163h1v1h-1zM123 714h1v1h-1zM123 694h1v1h-1zM123 674h1v1h-1zM123 655h1v1h-1zM123 635h1v1h-1zM123 615h1v1h-1zM123 596h1v1h-1zM123 576h1v1h-1zM123 556h1v1h-1zM123 537h1v1h-1zM123 517h1v1h-1zM123 498h1v1h-1zM123 478h1v1h-1zM123 458h1v1h-1zM123 439h1v1h-1zM123 419h1v1h-1zM123 399h1v1h-1zM123 380h1v1h-1zM123 360h1v1h-1zM123 340h1v1h-1zM123 321h1v1h-1zM123 301h1v1h-1zM123 281h1v1h-1zM123 262h1v1h-1zM123 242h1v1h-1zM123 222h1v1h-1zM123 203h1v1h-1zM123 183h1v1h-1zM123 163h1v1h-1zM142 714h1v1h-1zM142 694h1v1h-1zM142 674h1v1h-1zM142 655h1v1h-1zM142 635h1v1h-1zM142 615h1v1h-1zM142 596h1v1h-1zM142 576h1v1h-1zM142 556h1v1h-1zM142 537h1v1h-1zM142 517h1v1h-1zM142 498h1v1h-1zM142 478h1v1h-1zM142 458h1v1h-1zM142 439h1v1h-1zM142 419h1v1h-1zM142 399h1v1h-1zM142 380h1v1h-1zM142 360h1v1h-1zM142 340h1v1h-1zM142 321h1v1h-1zM142 301h1v1h-1zM142 281h1v1h-1zM142 262h1v1h-1zM142 242h1v1h-1zM142 222h1v1h-1zM142 203h1v1h-1zM142 183h1v1h-1zM142 163h1v1h-1zM162 714h1v1h-1zM162 694h1v1h-1zM162 674h1v1h-1zM162 655h1v1h-1zM162 635h1v1h-1zM162 615h1v1h-1zM162 596h1v1h-1zM162 576h1v1h-1zM162 556h1v1h-1zM162 537h1v1h-1zM162 517h1v1h-1zM162 498h1v1h-1zM162 478h1v1h-1zM162 458h1v1h-1zM162 439h1v1h-1zM162 419h1v1h-1zM162 399h1v1h-1zM162 380h1v1h-1zM162 360h1v1h-1zM162 340h1v1h-1zM162 321h1v1h-1zM162 301h1v1h-1zM162 281h1v1h-1zM162 262h1v1h-1zM162 242h1v1h-1zM162 222h1v1h-1zM162 203h1v1h-1zM162 183h1v1h-1zM162 163h1v1h-1zM182 714h1v1h-1zM182 694h1v1h-1zM182 674h1v1h-1zM182 655h1v1h-1zM182 635h1v1h-1zM182 615h1v1h-1zM182 596h1v1h-1zM182 576h1v1h-1zM182 556h1v1h-1zM182 537h1v1h-1zM182 517h1v1h-1zM182 498h1v1h-1zM182 478h1v1h-1zM182 458h1v1h-1zM182 439h1v1h-1zM182 419h1v1h-1zM182 399h1v1h-1zM182 380h1v1h-1zM182 360h1v1h-1zM182 340h1v1h-1zM182 321h1v1h-1zM182 301h1v1h-1zM182 281h1v1h-1zM182 262h1v1h-1zM182 242h1v1h-1zM182 222h1v1h-1zM182 203h1v1h-1zM182 183h1v1h-1zM182 163h1v1h-1zM201 714h1v1h-1zM201 694h1v1h-1zM201 674h1v1h-1zM201 655h1v1h-1zM201 635h1v1h-1zM201 615h1v1h-1zM201 596h1v1h-1zM201 576h1v1h-1zM201 556h1v1h-1zM201 537h1v1h-1zM201 517h1v1h-1zM201 498h1v1h-1zM201 478h1v1h-1zM201 458h1v1h-1zM201 439h1v1h-1zM201 419h1v1h-1zM201 399h1v1h-1zM201 380h1v1h-1zM201 360h1v1h-1zM201 340h1v1h-1zM201 321h1v1h-1zM201 301h1v1h-1zM201 281h1v1h-1zM201 262h1v1h-1zM201 242h1v1h-1zM201 222h1v1h-1zM201 203h1v1h-1zM201 183h1v1h-1zM201 163h1v1h-1zM221 714h1v1h-1zM221 694h1v1h-1zM221 674h1v1h-1zM221 655h1v1h-1zM221 635h1v1h-1zM221 615h1v1h-1zM221 596h1v1h-1zM221 576h1v1h-1zM221 556h1v1h-1zM221 537h1v1h-1zM221 517h1v1h-1zM221 498h1v1h-1zM221 478h1v1h-1zM221 458h1v1h-1zM221 439h1v1h-1zM221 419h1v1h-1zM221 399h1v1h-1zM221 380h1v1h-1zM221 360h1v1h-1zM221 340h1v1h-1zM221 321h1v1h-1zM221 301h1v1h-1zM221 281h1v1h-1zM221 262h1v1h-1zM221 242h1v1h-1zM221 222h1v1h-1zM221 203h1v1h-1zM221 183h1v1h-1zM221 163h1v1h-1zM241 714h1v1h-1zM241 694h1v1h-1zM241 674h1v1h-1zM241 655h1v1h-1zM241 635h1v1h-1zM241 615h1v1h-1zM241 596h1v1h-1zM241 576h1v1h-1zM241 556h1v1h-1zM241 537h1v1h-1zM241 517h1v1h-1zM241 498h1v1h-1zM241 478h1v1h-1zM241 458h1v1h-1zM241 439h1v1h-1zM241 419h1v1h-1zM241 399h1v1h-1zM241 380h1v1h-1zM241 360h1v1h-1zM241 340h1v1h-1zM241 321h1v1h-1zM241 301h1v1h-1zM241 281h1v1h-1zM241 262h1v1h-1zM241 242h1v1h-1zM241 222h1v1h-1zM241 203h1v1h-1zM241 183h1v1h-1zM241 163h1v1h-1zM260 714h1v1h-1zM260 694h1v1h-1zM260 674h1v1h-1zM260 655h1v1h-1zM260 635h1v1h-1zM260 615h1v1h-1zM260 596h1v1h-1zM260 576h1v1h-1zM260 556h1v1h-1zM260 537h1v1h-1zM260 517h1v1h-1zM260 498h1v1h-1zM260 478h1v1h-1zM260 458h1v1h-1zM260 439h1v1h-1zM260 419h1v1h-1zM260 399h1v1h-1zM260 380h1v1h-1zM260 360h1v1h-1zM260 340h1v1h-1zM260 321h1v1h-1zM260 301h1v1h-1zM260 281h1v1h-1zM260 262h1v1h-1zM260 242h1v1h-1zM260 222h1v1h-1zM260 203h1v1h-1zM260 183h1v1h-1zM260 163h1v1h-1zM280 714h1v1h-1zM280 694h1v1h-1zM280 674h1v1h-1zM280 655h1v1h-1zM280 635h1v1h-1zM280 615h1v1h-1zM280 596h1v1h-1zM280 576h1v1h-1zM280 556h1v1h-1zM280 537h1v1h-1zM280 517h1v1h-1zM280 498h1v1h-1zM280 478h1v1h-1zM280 458h1v1h-1zM280 439h1v1h-1zM280 419h1v1h-1zM280 399h1v1h-1zM280 380h1v1h-1zM280 360h1v1h-1zM280 340h1v1h-1zM280 321h1v1h-1zM280 301h1v1h-1zM280 281h1v1h-1zM280 262h1v1h-1zM280 242h1v1h-1zM280 222h1v1h-1zM280 203h1v1h-1zM280 183h1v1h-1zM280 163h1v1h-1zM300 714h1v1h-1zM300 694h1v1h-1zM300 674h1v1h-1zM300 655h1v1h-1zM300 635h1v1h-1zM300 615h1v1h-1zM300 596h1v1h-1zM300 576h1v1h-1zM300 556h1v1h-1zM300 537h1v1h-1zM300 517h1v1h-1zM300 498h1v1h-1zM300 478h1v1h-1zM300 458h1v1h-1zM300 439h1v1h-1zM300 419h1v1h-1zM300 399h1v1h-1zM300 380h1v1h-1zM300 360h1v1h-1zM300 340h1v1h-1zM300 321h1v1h-1zM300 301h1v1h-1zM300 281h1v1h-1zM300 262h1v1h-1zM300 242h1v1h-1zM300 222h1v1h-1zM300 203h1v1h-1zM300 183h1v1h-1zM300 163h1v1h-1zM319 714h1v1h-1zM319 694h1v1h-1zM319 674h1v1h-1zM319 655h1v1h-1zM319 635h1v1h-1zM319 615h1v1h-1zM319 596h1v1h-1zM319 576h1v1h-1zM319 556h1v1h-1zM319 537h1v1h-1zM319 517h1v1h-1zM319 498h1v1h-1zM319 478h1v1h-1zM319 458h1v1h-1zM319 439h1v1h-1zM319 419h1v1h-1zM319 399h1v1h-1zM319 380h1v1h-1zM319 360h1v1h-1zM319 340h1v1h-1zM319 321h1v1h-1zM319 301h1v1h-1zM319 281h1v1h-1zM319 262h1v1h-1zM319 242h1v1h-1zM319 222h1v1h-1zM319 203h1v1h-1zM319 183h1v1h-1zM319 163h1v1h-1zM339 714h1v1h-1zM339 694h1v1h-1zM339 674h1v1h-1zM339 655h1v1h-1zM339 635h1v1h-1zM339 615h1v1h-1zM339 596h1v1h-1zM339 576h1v1h-1zM339 556h1v1h-1zM339 537h1v1h-1zM339 517h1v1h-1zM339 498h1v1h-1zM339 478h1v1h-1zM339 458h1v1h-1zM339 439h1v1h-1zM339 419h1v1h-1zM339 399h1v1h-1zM339 380h1v1h-1zM339 360h1v1h-1zM339 340h1v1h-1zM339 321h1v1h-1zM339 301h1v1h-1zM339 281h1v1h-1zM339 262h1v1h-1zM339 242h1v1h-1zM339 222h1v1h-1zM339 203h1v1h-1zM339 183h1v1h-1zM339 163h1v1h-1zM359 714h1v1h-1zM359 694h1v1h-1zM359 674h1v1h-1zM359 655h1v1h-1zM359 635h1v1h-1zM359 615h1v1h-1zM359 596h1v1h-1zM359 576h1v1h-1zM359 556h1v1h-1zM359 537h1v1h-1zM359 517h1v1h-1zM359 498h1v1h-1zM359 478h1v1h-1zM359 458h1v1h-1zM359 439h1v1h-1zM359 419h1v1h-1zM359 399h1v1h-1zM359 380h1v1h-1zM359 360h1v1h-1zM359 340h1v1h-1zM359 321h1v1h-1zM359 301h1v1h-1zM359 281h1v1h-1zM359 262h1v1h-1zM359 242h1v1h-1zM359 222h1v1h-1zM359 203h1v1h-1zM359 183h1v1h-1zM359 163h1v1h-1zM378 714h1v1h-1zM378 694h1v1h-1zM378 674h1v1h-1zM378 655h1v1h-1zM378 635h1v1h-1zM378 615h1v1h-1zM378 596h1v1h-1zM378 576h1v1h-1zM378 556h1v1h-1zM378 537h1v1h-1zM378 517h1v1h-1zM378 498h1v1h-1zM378 478h1v1h-1zM378 458h1v1h-1zM378 439h1v1h-1zM378 419h1v1h-1zM378 399h1v1h-1zM378 380h1v1h-1zM378 360h1v1h-1zM378 340h1v1h-1zM378 321h1v1h-1zM378 301h1v1h-1zM378 281h1v1h-1zM378 262h1v1h-1zM378 242h1v1h-1zM378 222h1v1h-1zM378 203h1v1h-1zM378 183h1v1h-1zM378 163h1v1h-1zM398 714h1v1h-1zM398 694h1v1h-1zM398 674h1v1h-1zM398 655h1v1h-1zM398 635h1v1h-1zM398 615h1v1h-1zM398 596h1v1h-1zM398 576h1v1h-1zM398 556h1v1h-1zM398 537h1v1h-1zM398 517h1v1h-1zM398 498h1v1h-1zM398 478h1v1h-1zM398 458h1v1h-1zM398 439h1v1h-1zM398 419h1v1h-1zM398 399h1v1h-1zM398 380h1v1h-1zM398 360h1v1h-1zM398 340h1v1h-1zM398 321h1v1h-1zM398 301h1v1h-1zM398 281h1v1h-1zM398 262h1v1h-1zM398 242h1v1h-1zM398 222h1v1h-1zM398 203h1v1h-1zM398 183h1v1h-1zM398 163h1v1h-1zM418 714h1v1h-1zM418 694h1v1h-1zM418 674h1v1h-1zM418 655h1v1h-1zM418 635h1v1h-1zM418 615h1v1h-1zM418 596h1v1h-1zM418 576h1v1h-1zM418 556h1v1h-1zM418 537h1v1h-1zM418 517h1v1h-1zM418 498h1v1h-1zM418 478h1v1h-1zM418 458h1v1h-1zM418 439h1v1h-1zM418 419h1v1h-1zM418 399h1v1h-1zM418 380h1v1h-1zM418 360h1v1h-1zM418 340h1v1h-1zM418 321h1v1h-1zM418 301h1v1h-1zM418 281h1v1h-1zM418 262h1v1h-1zM418 242h1v1h-1zM418 222h1v1h-1zM418 203h1v1h-1zM418 183h1v1h-1zM418 163h1v1h-1zM437 714h1v1h-1zM437 694h1v1h-1zM437 674h1v1h-1zM437 655h1v1h-1zM437 635h1v1h-1zM437 615h1v1h-1zM437 596h1v1h-1zM437 576h1v1h-1zM437 556h1v1h-1zM437 537h1v1h-1zM437 517h1v1h-1zM437 498h1v1h-1zM437 478h1v1h-1zM437 458h1v1h-1zM437 439h1v1h-1zM437 419h1v1h-1zM437 399h1v1h-1zM437 380h1v1h-1zM437 360h1v1h-1zM437 340h1v1h-1zM437 321h1v1h-1zM437 301h1v1h-1zM437 281h1v1h-1zM437 262h1v1h-1zM437 242h1v1h-1zM437 222h1v1h-1zM437 203h1v1h-1zM437 183h1v1h-1zM437 163h1v1h-1zM457 714h1v1h-1zM457 694h1v1h-1zM457 674h1v1h-1zM457 655h1v1h-1zM457 635h1v1h-1zM457 615h1v1h-1zM457 596h1v1h-1zM457 576h1v1h-1zM457 556h1v1h-1zM457 537h1v1h-1zM457 517h1v1h-1zM457 498h1v1h-1zM457 478h1v1h-1zM457 458h1v1h-1zM457 439h1v1h-1zM457 419h1v1h-1zM457 399h1v1h-1zM457 380h1v1h-1zM457 360h1v1h-1zM457 340h1v1h-1zM457 321h1v1h-1zM457 301h1v1h-1zM457 281h1v1h-1zM457 262h1v1h-1zM457 242h1v1h-1zM457 222h1v1h-1zM457 203h1v1h-1zM457 183h1v1h-1zM457 163h1v1h-1zM476 714h1v1h-1zM476 694h1v1h-1zM476 674h1v1h-1zM476 655h1v1h-1zM476 635h1v1h-1zM476 615h1v1h-1zM476 596h1v1h-1zM476 576h1v1h-1zM476 556h1v1h-1zM476 537h1v1h-1zM476 517h1v1h-1zM476 498h1v1h-1zM476 478h1v1h-1zM476 458h1v1h-1zM476 439h1v1h-1zM476 419h1v1h-1zM476 399h1v1h-1zM476 380h1v1h-1zM476 360h1v1h-1zM476 340h1v1h-1zM476 321h1v1h-1zM476 301h1v1h-1zM476 281h1v1h-1zM476 262h1v1h-1zM476 242h1v1h-1zM476 222h1v1h-1zM476 203h1v1h-1zM476 183h1v1h-1zM476 163h1v1h-1zM496 714h1v1h-1zM496 694h1v1h-1zM496 674h1v1h-1zM496 655h1v1h-1zM496 635h1v1h-1zM496 615h1v1h-1zM496 596h1v1h-1zM496 576h1v1h-1zM496 556h1v1h-1zM496 537h1v1h-1zM496 517h1v1h-1zM496 498h1v1h-1zM496 478h1v1h-1zM496 458h1v1h-1zM496 439h1v1h-1zM496 419h1v1h-1zM496 399h1v1h-1zM496 380h1v1h-1zM496 360h1v1h-1zM496 340h1v1h-1zM496 321h1v1h-1zM496 301h1v1h-1zM496 281h1v1h-1zM496 262h1v1h-1zM496 242h1v1h-1zM496 222h1v1h-1zM496 203h1v1h-1zM496 183h1v1h-1zM496 163h1v1h-1zM516 714h1v1h-1zM516 694h1v1h-1zM516 674h1v1h-1zM516 655h1v1h-1zM516 635h1v1h-1zM516 615h1v1h-1zM516 596h1v1h-1zM516 576h1v1h-1zM516 556h1v1h-1zM516 537h1v1h-1zM516 517h1v1h-1zM516 498h1v1h-1zM516 478h1v1h-1zM516 458h1v1h-1zM516 439h1v1h-1zM516 419h1v1h-1zM516 399h1v1h-1zM516 380h1v1h-1zM516 360h1v1h-1zM516 340h1v1h-1zM516 321h1v1h-1zM516 301h1v1h-1zM516 281h1v1h-1zM516 262h1v1h-1zM516 242h1v1h-1zM516 222h1v1h-1zM516 203h1v1h-1zM516 183h1v1h-1zM516 163h1v1h-1zM535 714h1v1h-1zM535 694h1v1h-1zM535 674h1v1h-1zM535 655h1v1h-1zM535 635h1v1h-1zM535 615h1v1h-1zM535 596h1v1h-1zM535 576h1v1h-1zM535 556h1v1h-1zM535 537h1v1h-1zM535 517h1v1h-1zM535 498h1v1h-1zM535 478h1v1h-1zM535 458h1v1h-1zM535 439h1v1h-1zM535 419h1v1h-1zM535 399h1v1h-1zM535 380h1v1h-1zM535 360h1v1h-1zM535 340h1v1h-1zM535 321h1v1h-1zM535 301h1v1h-1zM535 281h1v1h-1zM535 262h1v1h-1zM535 242h1v1h-1zM535 222h1v1h-1zM535 203h1v1h-1zM535 183h1v1h-1zM535 163h1v1h-1zM555 714h1v1h-1zM555 694h1v1h-1zM555 674h1v1h-1zM555 655h1v1h-1zM555 635h1v1h-1zM555 615h1v1h-1zM555 596h1v1h-1zM555 576h1v1h-1zM555 556h1v1h-1zM555 537h1v1h-1zM555 517h1v1h-1zM555 498h1v1h-1zM555 478h1v1h-1zM555 458h1v1h-1zM555 439h1v1h-1zM555 419h1v1h-1zM555 399h1v1h-1zM555 380h1v1h-1zM555 360h1v1h-1zM555 340h1v1h-1zM555 321h1v1h-1zM555 301h1v1h-1zM555 281h1v1h-1zM555 262h1v1h-1zM555 242h1v1h-1zM555 222h1v1h-1zM555 203h1v1h-1zM555 183h1v1h-1zM555 163h1v1h-1zM575 714h1v1h-1zM575 694h1v1h-1zM575 674h1v1h-1zM575 655h1v1h-1zM575 635h1v1h-1zM575 615h1v1h-1zM575 596h1v1h-1zM575 576h1v1h-1zM575 556h1v1h-1zM575 537h1v1h-1zM575 517h1v1h-1zM575 498h1v1h-1zM575 478h1v1h-1zM575 458h1v1h-1zM575 439h1v1h-1zM575 419h1v1h-1zM575 399h1v1h-1zM575 380h1v1h-1zM575 360h1v1h-1zM575 340h1v1h-1zM575 321h1v1h-1zM575 301h1v1h-1zM575 281h1v1h-1zM575 262h1v1h-1zM575 242h1v1h-1zM575 222h1v1h-1zM575 203h1v1h-1zM575 183h1v1h-1zM575 163h1v1h-1zM594 714h1v1h-1zM594 694h1v1h-1zM594 674h1v1h-1zM594 655h1v1h-1zM594 635h1v1h-1zM594 615h1v1h-1zM594 596h1v1h-1zM594 576h1v1h-1zM594 556h1v1h-1zM594 537h1v1h-1zM594 517h1v1h-1zM594 498h1v1h-1zM594 478h1v1h-1zM594 458h1v1h-1zM594 439h1v1h-1zM594 419h1v1h-1zM594 399h1v1h-1zM594 380h1v1h-1zM594 360h1v1h-1zM594 340h1v1h-1zM594 321h1v1h-1zM594 301h1v1h-1zM594 281h1v1h-1zM594 262h1v1h-1zM594 242h1v1h-1zM594 222h1v1h-1zM594 203h1v1h-1zM594 183h1v1h-1zM594 163h1v1h-1zM614 714h1v1h-1zM614 694h1v1h-1zM614 674h1v1h-1zM614 655h1v1h-1zM614 635h1v1h-1zM614 615h1v1h-1zM614 596h1v1h-1zM614 576h1v1h-1zM614 556h1v1h-1zM614 537h1v1h-1zM614 517h1v1h-1zM614 498h1v1h-1zM614 478h1v1h-1zM614 458h1v1h-1zM614 439h1v1h-1zM614 419h1v1h-1zM614 399h1v1h-1zM614 380h1v1h-1zM614 360h1v1h-1zM614 340h1v1h-1zM614 321h1v1h-1zM614 301h1v1h-1zM614 281h1v1h-1zM614 262h1v1h-1zM614 242h1v1h-1zM614 222h1v1h-1zM614 203h1v1h-1zM614 183h1v1h-1zM614 163h1v1h-1zM634 714h1v1h-1zM634 694h1v1h-1zM634 674h1v1h-1zM634 655h1v1h-1zM634 635h1v1h-1zM634 615h1v1h-1zM634 596h1v1h-1zM634 576h1v1h-1zM634 556h1v1h-1zM634 537h1v1h-1zM634 517h1v1h-1zM634 498h1v1h-1zM634 478h1v1h-1zM634 458h1v1h-1zM634 439h1v1h-1zM634 419h1v1h-1zM634 399h1v1h-1zM634 380h1v1h-1zM634 360h1v1h-1zM634 340h1v1h-1zM634 321h1v1h-1zM634 301h1v1h-1zM634 281h1v1h-1zM634 262h1v1h-1zM634 242h1v1h-1zM634 222h1v1h-1zM634 203h1v1h-1zM634 183h1v1h-1zM634 163h1v1h-1zM653 714h1v1h-1zM653 694h1v1h-1zM653 674h1v1h-1zM653 655h1v1h-1zM653 635h1v1h-1zM653 615h1v1h-1zM653 596h1v1h-1zM653 576h1v1h-1zM653 556h1v1h-1zM653 537h1v1h-1zM653 517h1v1h-1zM653 498h1v1h-1zM653 478h1v1h-1zM653 458h1v1h-1zM653 439h1v1h-1zM653 419h1v1h-1zM653 399h1v1h-1zM653 380h1v1h-1zM653 360h1v1h-1zM653 340h1v1h-1zM653 321h1v1h-1zM653 301h1v1h-1zM653 281h1v1h-1zM653 262h1v1h-1zM653 242h1v1h-1zM653 222h1v1h-1zM653 203h1v1h-1zM653 183h1v1h-1zM653 163h1v1h-1zM673 714h1v1h-1zM673 694h1v1h-1zM673 674h1v1h-1zM673 655h1v1h-1zM673 635h1v1h-1zM673 615h1v1h-1zM673 596h1v1h-1zM673 576h1v1h-1zM673 556h1v1h-1zM673 537h1v1h-1zM673 517h1v1h-1zM673 498h1v1h-1zM673 478h1v1h-1zM673 458h1v1h-1zM673 439h1v1h-1zM673 419h1v1h-1zM673 399h1v1h-1zM673 380h1v1h-1zM673 360h1v1h-1zM673 340h1v1h-1zM673 321h1v1h-1zM673 301h1v1h-1zM673 281h1v1h-1zM673 262h1v1h-1zM673 242h1v1h-1zM673 222h1v1h-1zM673 203h1v1h-1zM673 183h1v1h-1zM673 163h1v1h-1zM693 714h1v1h-1zM693 694h1v1h-1zM693 674h1v1h-1zM693 655h1v1h-1zM693 635h1v1h-1zM693 615h1v1h-1zM693 596h1v1h-1zM693 576h1v1h-1zM693 556h1v1h-1zM693 537h1v1h-1zM693 517h1v1h-1zM693 498h1v1h-1zM693 478h1v1h-1zM693 458h1v1h-1zM693 439h1v1h-1zM693 419h1v1h-1zM693 399h1v1h-1zM693 380h1v1h-1zM693 360h1v1h-1zM693 340h1v1h-1zM693 321h1v1h-1zM693 301h1v1h-1zM693 281h1v1h-1zM693 262h1v1h-1zM693 242h1v1h-1zM693 222h1v1h-1zM693 203h1v1h-1zM693 183h1v1h-1zM693 163h1v1h-1zM712 714h1v1h-1zM712 694h1v1h-1zM712 674h1v1h-1zM712 655h1v1h-1zM712 635h1v1h-1zM712 615h1v1h-1zM712 596h1v1h-1zM712 576h1v1h-1zM712 556h1v1h-1zM712 537h1v1h-1zM712 517h1v1h-1zM712 498h1v1h-1zM712 478h1v1h-1zM712 458h1v1h-1zM712 439h1v1h-1zM712 419h1v1h-1zM712 399h1v1h-1zM712 380h1v1h-1zM712 360h1v1h-1zM712 340h1v1h-1zM712 321h1v1h-1zM712 301h1v1h-1zM712 281h1v1h-1zM712 262h1v1h-1zM712 242h1v1h-1zM712 222h1v1h-1zM712 203h1v1h-1zM712 183h1v1h-1zM712 163h1v1h-1zM732 714h1v1h-1zM732 694h1v1h-1zM732 674h1v1h-1zM732 655h1v1h-1zM732 635h1v1h-1zM732 615h1v1h-1zM732 596h1v1h-1zM732 576h1v1h-1zM732 556h1v1h-1zM732 537h1v1h-1zM732 517h1v1h-1zM732 498h1v1h-1zM732 478h1v1h-1zM732 458h1v1h-1zM732 439h1v1h-1zM732 419h1v1h-1zM732 399h1v1h-1zM732 380h1v1h-1zM732 360h1v1h-1zM732 340h1v1h-1zM732 321h1v1h-1zM732 301h1v1h-1zM732 281h1v1h-1zM732 262h1v1h-1zM732 242h1v1h-1zM732 222h1v1h-1zM732 203h1v1h-1zM732 183h1v1h-1zM732 163h1v1h-1zM752 714h1v1h-1zM752 694h1v1h-1zM752 674h1v1h-1zM752 655h1v1h-1zM752 635h1v1h-1zM752 615h1v1h-1zM752 596h1v1h-1zM752 576h1v1h-1zM752 556h1v1h-1zM752 537h1v1h-1zM752 517h1v1h-1zM752 498h1v1h-1zM752 478h1v1h-1zM752 458h1v1h-1zM752 439h1v1h-1zM752 419h1v1h-1zM752 399h1v1h-1zM752 380h1v1h-1zM752 360h1v1h-1zM752 340h1v1h-1zM752 321h1v1h-1zM752 301h1v1h-1zM752 281h1v1h-1zM752 262h1v1h-1zM752 242h1v1h-1zM752 222h1v1h-1zM752 203h1v1h-1zM752 183h1v1h-1zM752 163h1v1h-1zM771 714h1v1h-1zM771 694h1v1h-1zM771 674h1v1h-1zM771 655h1v1h-1zM771 635h1v1h-1zM771 615h1v1h-1zM771 596h1v1h-1zM771 576h1v1h-1zM771 556h1v1h-1zM771 537h1v1h-1zM771 517h1v1h-1zM771 498h1v1h-1zM771 478h1v1h-1zM771 458h1v1h-1zM771 439h1v1h-1zM771 419h1v1h-1zM771 399h1v1h-1zM771 380h1v1h-1zM771 360h1v1h-1zM771 340h1v1h-1zM771 321h1v1h-1zM771 301h1v1h-1zM771 281h1v1h-1zM771 262h1v1h-1zM771 242h1v1h-1zM771 222h1v1h-1zM771 203h1v1h-1zM771 183h1v1h-1zM771 163h1v1h-1zM791 714h1v1h-1zM791 694h1v1h-1zM791 674h1v1h-1zM791 655h1v1h-1zM791 635h1v1h-1zM791 615h1v1h-1zM791 596h1v1h-1zM791 576h1v1h-1zM791 556h1v1h-1zM791 537h1v1h-1zM791 517h1v1h-1zM791 498h1v1h-1zM791 478h1v1h-1zM791 458h1v1h-1zM791 439h1v1h-1zM791 419h1v1h-1zM791 399h1v1h-1zM791 380h1v1h-1zM791 360h1v1h-1zM791 340h1v1h-1zM791 321h1v1h-1zM791 301h1v1h-1zM791 281h1v1h-1zM791 262h1v1h-1zM791 242h1v1h-1zM791 222h1v1h-1zM791 203h1v1h-1zM791 183h1v1h-1zM791 163h1v1h-1zM810 714h1v1h-1zM810 694h1v1h-1zM810 674h1v1h-1zM810 655h1v1h-1zM810 635h1v1h-1zM810 615h1v1h-1zM810 596h1v1h-1zM810 576h1v1h-1zM810 556h1v1h-1zM810 537h1v1h-1zM810 517h1v1h-1zM810 498h1v1h-1zM810 478h1v1h-1zM810 458h1v1h-1zM810 439h1v1h-1zM810 419h1v1h-1zM810 399h1v1h-1zM810 380h1v1h-1zM810 360h1v1h-1zM810 340h1v1h-1zM810 321h1v1h-1zM810 301h1v1h-1zM810 281h1v1h-1zM810 262h1v1h-1zM810 242h1v1h-1zM810 222h1v1h-1zM810 203h1v1h-1zM810 183h1v1h-1zM810 163h1v1h-1zM830 714h1v1h-1zM830 694h1v1h-1zM830 674h1v1h-1zM830 655h1v1h-1zM830 635h1v1h-1zM830 615h1v1h-1zM830 596h1v1h-1zM830 576h1v1h-1zM830 556h1v1h-1zM830 537h1v1h-1zM830 517h1v1h-1zM830 498h1v1h-1zM830 478h1v1h-1zM830 458h1v1h-1zM830 439h1v1h-1zM830 419h1v1h-1zM830 399h1v1h-1zM830 380h1v1h-1zM830 360h1v1h-1zM830 340h1v1h-1zM830 321h1v1h-1zM830 301h1v1h-1zM830 281h1v1h-1zM830 262h1v1h-1zM830 242h1v1h-1zM830 222h1v1h-1zM830 203h1v1h-1zM830 183h1v1h-1zM830 163h1v1h-1zM850 714h1v1h-1zM850 694h1v1h-1zM850 674h1v1h-1zM850 655h1v1h-1zM850 635h1v1h-1zM850 615h1v1h-1zM850 596h1v1h-1zM850 576h1v1h-1zM850 556h1v1h-1zM850 537h1v1h-1zM850 517h1v1h-1zM850 498h1v1h-1zM850 478h1v1h-1zM850 458h1v1h-1zM850 439h1v1h-1zM850 419h1v1h-1zM850 399h1v1h-1zM850 380h1v1h-1zM850 360h1v1h-1zM850 340h1v1h-1zM850 321h1v1h-1zM850 301h1v1h-1zM850 281h1v1h-1zM850 262h1v1h-1zM850 242h1v1h-1zM850 222h1v1h-1zM850 203h1v1h-1zM850 183h1v1h-1zM850 163h1v1h-1zM869 714h1v1h-1zM869 694h1v1h-1zM869 674h1v1h-1zM869 655h1v1h-1zM869 635h1v1h-1zM869 615h1v1h-1zM869 596h1v1h-1zM869 576h1v1h-1zM869 556h1v1h-1zM869 537h1v1h-1zM869 517h1v1h-1zM869 498h1v1h-1zM869 478h1v1h-1zM869 458h1v1h-1zM869 439h1v1h-1zM869 419h1v1h-1zM869 399h1v1h-1zM869 380h1v1h-1zM869 360h1v1h-1zM869 340h1v1h-1zM869 321h1v1h-1zM869 301h1v1h-1zM869 281h1v1h-1zM869 262h1v1h-1zM869 242h1v1h-1zM869 222h1v1h-1zM869 203h1v1h-1zM869 183h1v1h-1zM869 163h1v1h-1zM889 714h1v1h-1zM889 694h1v1h-1zM889 674h1v1h-1zM889 655h1v1h-1zM889 635h1v1h-1zM889 615h1v1h-1zM889 596h1v1h-1zM889 576h1v1h-1zM889 556h1v1h-1zM889 537h1v1h-1zM889 517h1v1h-1zM889 498h1v1h-1zM889 478h1v1h-1zM889 458h1v1h-1zM889 439h1v1h-1zM889 419h1v1h-1zM889 399h1v1h-1zM889 380h1v1h-1zM889 360h1v1h-1zM889 340h1v1h-1zM889 321h1v1h-1zM889 301h1v1h-1zM889 281h1v1h-1zM889 262h1v1h-1zM889 242h1v1h-1zM889 222h1v1h-1zM889 203h1v1h-1zM889 183h1v1h-1zM889 163h1v1h-1zM909 714h1v1h-1zM909 694h1v1h-1zM909 674h1v1h-1zM909 655h1v1h-1zM909 635h1v1h-1zM909 615h1v1h-1zM909 596h1v1h-1zM909 576h1v1h-1zM909 556h1v1h-1zM909 537h1v1h-1zM909 517h1v1h-1zM909 498h1v1h-1zM909 478h1v1h-1zM909 458h1v1h-1zM909 439h1v1h-1zM909 419h1v1h-1zM909 399h1v1h-1zM909 380h1v1h-1zM909 360h1v1h-1zM909 340h1v1h-1zM909 321h1v1h-1zM909 301h1v1h-1zM909 281h1v1h-1zM909 262h1v1h-1zM909 242h1v1h-1zM909 222h1v1h-1zM909 203h1v1h-1zM909 183h1v1h-1zM909 163h1v1h-1zM928 714h1v1h-1zM928 694h1v1h-1zM928 674h1v1h-1zM928 655h1v1h-1zM928 635h1v1h-1zM928 615h1v1h-1zM928 596h1v1h-1zM928 576h1v1h-1zM928 556h1v1h-1zM928 537h1v1h-1zM928 517h1v1h-1zM928 498h1v1h-1zM928 478h1v1h-1zM928 458h1v1h-1zM928 439h1v1h-1zM928 419h1v1h-1zM928 399h1v1h-1zM928 380h1v1h-1zM928 360h1v1h-1zM928 340h1v1h-1zM928 321h1v1h-1zM928 301h1v1h-1zM928 281h1v1h-1zM928 262h1v1h-1zM928 242h1v1h-1zM928 222h1v1h-1zM928 203h1v1h-1zM928 183h1v1h-1zM928 163h1v1h-1zM948 714h1v1h-1zM948 694h1v1h-1zM948 674h1v1h-1zM948 655h1v1h-1zM948 635h1v1h-1zM948 615h1v1h-1zM948 596h1v1h-1zM948 576h1v1h-1zM948 556h1v1h-1zM948 537h1v1h-1zM948 517h1v1h-1zM948 498h1v1h-1zM948 478h1v1h-1zM948 458h1v1h-1zM948 439h1v1h-1zM948 419h1v1h-1zM948 399h1v1h-1zM948 380h1v1h-1zM948 360h1v1h-1zM948 340h1v1h-1zM948 321h1v1h-1zM948 301h1v1h-1zM948 281h1v1h-1zM948 262h1v1h-1zM948 242h1v1h-1zM948 222h1v1h-1zM948 203h1v1h-1zM948 183h1v1h-1zM948 163h1v1h-1zM968 714h1v1h-1zM968 694h1v1h-1zM968 674h1v1h-1zM968 655h1v1h-1zM968 635h1v1h-1zM968 615h1v1h-1zM968 596h1v1h-1zM968 576h1v1h-1zM968 556h1v1h-1zM968 537h1v1h-1zM968 517h1v1h-1zM968 498h1v1h-1zM968 478h1v1h-1zM968 458h1v1h-1zM968 439h1v1h-1zM968 419h1v1h-1zM968 399h1v1h-1zM968 380h1v1h-1zM968 360h1v1h-1zM968 340h1v1h-1zM968 321h1v1h-1zM968 301h1v1h-1zM968 281h1v1h-1zM968 262h1v1h-1zM968 242h1v1h-1zM968 222h1v1h-1zM968 203h1v1h-1zM968 183h1v1h-1zM968 163h1v1h-1zM987 714h1v1h-1zM987 694h1v1h-1zM987 674h1v1h-1zM987 655h1v1h-1zM987 635h1v1h-1zM987 615h1v1h-1zM987 596h1v1h-1zM987 576h1v1h-1zM987 556h1v1h-1zM987 537h1v1h-1zM987 517h1v1h-1zM987 498h1v1h-1zM987 478h1v1h-1zM987 458h1v1h-1zM987 439h1v1h-1zM987 419h1v1h-1zM987 399h1v1h-1zM987 380h1v1h-1zM987 360h1v1h-1zM987 340h1v1h-1zM987 321h1v1h-1zM987 301h1v1h-1zM987 281h1v1h-1zM987 262h1v1h-1zM987 242h1v1h-1zM987 222h1v1h-1zM987 203h1v1h-1zM987 183h1v1h-1zM987 163h1v1h-1zM1007 714h1v1h-1zM1007 694h1v1h-1zM1007 674h1v1h-1zM1007 655h1v1h-1zM1007 635h1v1h-1zM1007 615h1v1h-1zM1007 596h1v1h-1zM1007 576h1v1h-1zM1007 556h1v1h-1zM1007 537h1v1h-1zM1007 517h1v1h-1zM1007 498h1v1h-1zM1007 478h1v1h-1zM1007 458h1v1h-1zM1007 439h1v1h-1zM1007 419h1v1h-1zM1007 399h1v1h-1zM1007 380h1v1h-1zM1007 360h1v1h-1zM1007 340h1v1h-1zM1007 321h1v1h-1zM1007 301h1v1h-1zM1007 281h1v1h-1zM1007 262h1v1h-1zM1007 242h1v1h-1zM1007 222h1v1h-1zM1007 203h1v1h-1zM1007 183h1v1h-1zM1007 163h1v1h-1zM1027 714h1v1h-1zM1027 694h1v1h-1zM1027 674h1v1h-1zM1027 655h1v1h-1zM1027 635h1v1h-1zM1027 615h1v1h-1zM1027 596h1v1h-1zM1027 576h1v1h-1zM1027 556h1v1h-1zM1027 537h1v1h-1zM1027 517h1v1h-1zM1027 498h1v1h-1zM1027 478h1v1h-1zM1027 458h1v1h-1zM1027 439h1v1h-1zM1027 419h1v1h-1zM1027 399h1v1h-1zM1027 380h1v1h-1zM1027 360h1v1h-1zM1027 340h1v1h-1zM1027 321h1v1h-1zM1027 301h1v1h-1zM1027 281h1v1h-1zM1027 262h1v1h-1zM1027 242h1v1h-1zM1027 222h1v1h-1zM1027 203h1v1h-1zM1027 183h1v1h-1zM1027 163h1v1h-1zM1046 714h1v1h-1zM1046 694h1v1h-1zM1046 674h1v1h-1zM1046 655h1v1h-1zM1046 635h1v1h-1zM1046 615h1v1h-1zM1046 596h1v1h-1zM1046 576h1v1h-1zM1046 556h1v1h-1zM1046 537h1v1h-1zM1046 517h1v1h-1zM1046 498h1v1h-1zM1046 478h1v1h-1zM1046 458h1v1h-1zM1046 439h1v1h-1zM1046 419h1v1h-1zM1046 399h1v1h-1zM1046 380h1v1h-1zM1046 360h1v1h-1zM1046 340h1v1h-1zM1046 321h1v1h-1zM1046 301h1v1h-1zM1046 281h1v1h-1zM1046 262h1v1h-1zM1046 242h1v1h-1zM1046 222h1v1h-1zM1046 203h1v1h-1zM1046 183h1v1h-1zM1046 163h1v1h-1zM1066 714h1v1h-1zM1066 694h1v1h-1zM1066 674h1v1h-1zM1066 655h1v1h-1zM1066 635h1v1h-1zM1066 615h1v1h-1zM1066 596h1v1h-1zM1066 576h1v1h-1zM1066 556h1v1h-1zM1066 537h1v1h-1zM1066 517h1v1h-1zM1066 498h1v1h-1zM1066 478h1v1h-1zM1066 458h1v1h-1zM1066 439h1v1h-1zM1066 419h1v1h-1zM1066 399h1v1h-1zM1066 380h1v1h-1zM1066 360h1v1h-1zM1066 340h1v1h-1zM1066 321h1v1h-1zM1066 301h1v1h-1zM1066 281h1v1h-1zM1066 262h1v1h-1zM1066 242h1v1h-1zM1066 222h1v1h-1zM1066 203h1v1h-1zM1066 183h1v1h-1zM1066 163h1v1h-1zM1086 714h1v1h-1zM1086 694h1v1h-1zM1086 674h1v1h-1zM1086 655h1v1h-1zM1086 635h1v1h-1zM1086 615h1v1h-1zM1086 596h1v1h-1zM1086 576h1v1h-1zM1086 556h1v1h-1zM1086 537h1v1h-1zM1086 517h1v1h-1zM1086 498h1v1h-1zM1086 478h1v1h-1zM1086 458h1v1h-1zM1086 439h1v1h-1zM1086 419h1v1h-1zM1086 399h1v1h-1zM1086 380h1v1h-1zM1086 360h1v1h-1zM1086 340h1v1h-1zM1086 321h1v1h-1zM1086 301h1v1h-1zM1086 281h1v1h-1zM1086 262h1v1h-1zM1086 242h1v1h-1zM1086 222h1v1h-1zM1086 203h1v1h-1zM1086 183h1v1h-1zM1086 163h1v1h-1zM1105 714h1v1h-1zM1105 694h1v1h-1zM1105 674h1v1h-1zM1105 655h1v1h-1zM1105 635h1v1h-1zM1105 615h1v1h-1zM1105 596h1v1h-1zM1105 576h1v1h-1zM1105 556h1v1h-1zM1105 537h1v1h-1zM1105 517h1v1h-1zM1105 498h1v1h-1zM1105 478h1v1h-1zM1105 458h1v1h-1zM1105 439h1v1h-1zM1105 419h1v1h-1zM1105 399h1v1h-1zM1105 380h1v1h-1zM1105 360h1v1h-1zM1105 340h1v1h-1zM1105 321h1v1h-1zM1105 301h1v1h-1zM1105 281h1v1h-1zM1105 262h1v1h-1zM1105 242h1v1h-1zM1105 222h1v1h-1zM1105 203h1v1h-1zM1105 183h1v1h-1zM1105 163h1v1h-1zM1125 714h1v1h-1zM1125 694h1v1h-1zM1125 674h1v1h-1zM1125 655h1v1h-1zM1125 635h1v1h-1zM1125 615h1v1h-1zM1125 596h1v1h-1zM1125 576h1v1h-1zM1125 556h1v1h-1zM1125 537h1v1h-1zM1125 517h1v1h-1zM1125 498h1v1h-1zM1125 478h1v1h-1zM1125 458h1v1h-1zM1125 439h1v1h-1zM1125 419h1v1h-1zM1125 399h1v1h-1zM1125 380h1v1h-1zM1125 360h1v1h-1zM1125 340h1v1h-1zM1125 321h1v1h-1zM1125 301h1v1h-1zM1125 281h1v1h-1zM1125 262h1v1h-1zM1125 242h1v1h-1zM1125 222h1v1h-1zM1125 203h1v1h-1zM1125 183h1v1h-1zM1125 163h1v1h-1z" fill="#3e3e3e"/><path d="M95.0 222.4 L230.8 222.4" fill="none" stroke="#0a8cff" stroke-width="3.2" stroke-linejoin="miter" stroke-linecap="round"/><path d="M211.2 155.0 L211.2 242.1" fill="none" stroke="#0a8cff" stroke-width="3.2" stroke-linejoin="miter" stroke-linecap="round"/><path d="M299.6 155.0 L299.6 213.0" fill="none" stroke="#0a8cff" stroke-width="3.2" stroke-linejoin="miter" stroke-linecap="round"/><path d="M456.8 155.0 L456.8 213.0" fill="none" stroke="#0a8cff" stroke-width="3.2" stroke-linejoin="miter" stroke-linecap="round"/><path d="M545.2 155.0 L545.2 242.5" fill="none" stroke="#0a8cff" stroke-width="3.2" stroke-linejoin="miter" stroke-linecap="round"/><path d="M1105.0 576.1 L1143.0 576.1" fill="none" stroke="#0a8cff" stroke-width="3.2" stroke-linejoin="miter" stroke-linecap="round"/><path d="M1132.5 694.0 L1143.0 694.0" fill="none" stroke="#0a8cff" stroke-width="3.2" stroke-linejoin="miter" stroke-linecap="round"/><path d="M90.0 694.0 L133.0 694.0" fill="none" stroke="#0a8cff" stroke-width="3.2" stroke-linejoin="miter" stroke-linecap="round"/><path d="M142.4 703.5 L142.4 737.0" fill="none" stroke="#0a8cff" stroke-width="3.2" stroke-linejoin="miter" stroke-linecap="round"/><path d="M889.1 703.5 L889.1 737.0" fill="none" stroke="#0a8cff" stroke-width="3.2" stroke-linejoin="miter" stroke-linecap="round"/><path d="M1124.9 703.5 L1124.9 737.0" fill="none" stroke="#0a8cff" stroke-width="3.2" stroke-linejoin="miter" stroke-linecap="round"/><line x1="299.6" y1="222.4" x2="299.6" y2="694.0" stroke="#fff" stroke-width="2.6" stroke-dasharray="33 15.45" stroke-dashoffset="24"/><line x1="456.8" y1="222.4" x2="456.8" y2="694.0" stroke="#fff" stroke-width="2.6" stroke-dasharray="33 15.45" stroke-dashoffset="24"/><line x1="378.2" y1="163.5" x2="378.2" y2="737" stroke="#ff0000" stroke-width="2.6" stroke-dasharray="82 15 17.5 15.2" stroke-dashoffset="5.4"/><path d="M211.2 576.1 L211.2 251.9 L240.7 222.4 L515.8 222.4 L545.2 251.9 L545.2 576.1" fill="none" stroke="#fff" stroke-width="4.5" stroke-linejoin="miter" /><path d="M211.2 251.9 L545.2 251.9" fill="none" stroke="#fff" stroke-width="4.5" stroke-linejoin="miter" /><path d="M142.4 694.0 L142.4 605.6 L171.9 576.1 L1095.4 576.1 L1124.9 605.6 L1124.9 694.0 L142.4 694.0" fill="none" stroke="#fff" stroke-width="4.5" stroke-linejoin="miter" /><path d="M142.4 605.6 L1124.9 605.6" fill="none" stroke="#fff" stroke-width="4.5" stroke-linejoin="miter" /><path d="M889.1 694.0 L889.1 605.6 L877.2 576.1" fill="none" stroke="#fff" stroke-width="4.5" stroke-linejoin="miter" /></svg><div style="position:absolute;left:1138px;top:155px;width:16px;height:577px;background:#f8f8f8"></div><div style="position:absolute;left:1143px;top:350px;width:7.5px;height:188px;background:#808080;border-radius:4px"></div><div style="position:absolute;left:95px;top:732px;width:1004px;height:15px;background:#f8f8f8"></div><div style="position:absolute;left:344px;top:737px;width:506px;height:8px;background:#808080;border-radius:4px"></div><div style="position:absolute;left:1099px;top:732px;width:55px;height:15px;background:#ececec"></div><div style="position:absolute;left:1119.5px;top:735px;font-size:12.2px;line-height:12.2px;color:#111;white-space:nowrap;">1 &lt; 10</div><div style="position:absolute;left:72px;top:747.5px;width:1082px;height:2px;background:#c0c0c0"></div><div style="position:absolute;left:72px;top:749.5px;width:1082px;height:20.5px;background:#fff"></div><div style="position:absolute;left:77px;top:752px;font-size:13.5px;line-height:13.5px;color:#1818d0;white-space:nowrap;"><i>Opdracht:</i> zoomin</div><div style="position:absolute;left:1144px;top:749px;width:7px;height:19px;background:#7e7e7e;border-radius:0 0 3.5px 3.5px"></div><div style="position:absolute;left:72px;top:770px;width:1082px;height:1.2px;background:#b4b4b4"></div><div style="position:absolute;left:72px;top:771.2px;width:1082px;height:25.8px;background:#ececec"></div><div style="position:absolute;left:73px;top:779px;font-size:13.5px;line-height:13.5px;color:#111;white-space:nowrap;">Opdracht:</div><div style="position:absolute;left:137px;top:776px;width:990px;height:18px;background:#fff"></div><div style="position:absolute;left:1127px;top:772px;width:26px;height:25px;background:linear-gradient(#fafafa,#e9e9e9);border:1px solid #b5b5b5;box-sizing:border-box"></div><div style="position:absolute;left:1133px;top:780px;width:14px;height:10px;background:#efefef;border:1px solid #444;border-top:2.5px solid #000;box-sizing:border-box"></div><div style="position:absolute;left:1154px;top:108px;width:301px;height:690px;background:#fff"></div><div style="position:absolute;left:1154px;top:108px;width:1.5px;height:690px;background:#c4c4c4"></div><div style="position:absolute;left:1453.5px;top:108px;width:1.5px;height:690px;background:#c8c8c8"></div><div style="position:absolute;left:1155.5px;top:108px;width:298px;height:22px;background:linear-gradient(#ececec,#dcdcdc)"></div><svg style="position:absolute;left:1157px;top:111px;overflow:visible" width="14" height="14" viewBox="0 0 14 14"><circle cx="7" cy="7" r="6.9" fill="#606060"/><path d="M4.3 4.3 L9.7 9.7 M9.7 4.3 L4.3 9.7" stroke="#e8e8e8" stroke-width="1.9"/></svg><svg style="position:absolute;left:1175px;top:111px;overflow:visible" width="14" height="14" viewBox="0 0 14 14"><circle cx="7" cy="7" r="6.9" fill="#606060"/><rect x="3.5" y="6" width="5" height="4" fill="none" stroke="#e8e8e8" stroke-width="1.1"/><path d="M5.5 6 V4 H10.5 V8 H8.5" fill="none" stroke="#e8e8e8" stroke-width="1.1"/></svg><div style="position:absolute;left:1297.5px;top:113px;font-size:12px;line-height:12px;color:#222;white-space:nowrap;">Lagenlijst</div><div style="position:absolute;left:1155.5px;top:130px;width:298px;height:26px;background:#c0c0c0"></div><div style="position:absolute;left:1156px;top:131px;width:58px;height:24px;background:linear-gradient(#f6f6f6,#e9e9e9)"></div><div style="position:absolute;left:1216px;top:131px;width:58.5px;height:24px;background:linear-gradient(#f6f6f6,#e9e9e9)"></div><div style="position:absolute;left:1276px;top:131px;width:58.5px;height:24px;background:linear-gradient(#f6f6f6,#e9e9e9)"></div><div style="position:absolute;left:1336px;top:131px;width:58.5px;height:24px;background:linear-gradient(#f6f6f6,#e9e9e9)"></div><div style="position:absolute;left:1396px;top:131px;width:57.5px;height:24px;background:linear-gradient(#f6f6f6,#e9e9e9)"></div><svg style="position:absolute;left:1177px;top:136px;overflow:visible" width="15" height="13" viewBox="0 0 15 13"><g transform="translate(0.2 0.5)"><path d="M0.3 6 C1.5 0.8 13.2 -0.2 14.7 5.8 C14.3 8.8 11.5 11 7.5 11 C3.5 11 1.2 9 0.3 6 Z" fill="#000"/><path d="M2.4 5.6 C3.6 3.2 11.2 3.2 12.5 5.6 C11.4 9.6 3.5 9.6 2.4 5.6 Z" fill="#fff"/><circle cx="7.4" cy="5.3" r="2.9" fill="#000"/><circle cx="6.5" cy="4.4" r="0.6" fill="#888"/></g></svg><svg style="position:absolute;left:1237px;top:136px;overflow:visible" width="15" height="13" viewBox="0 0 15 13"><g transform="translate(0.2 0.5)" opacity="0.33"><path d="M0.3 6 C1.5 0.8 13.2 -0.2 14.7 5.8 C14.3 8.8 11.5 11 7.5 11 C3.5 11 1.2 9 0.3 6 Z" fill="#000"/><path d="M2.4 5.6 C3.6 3.2 11.2 3.2 12.5 5.6 C11.4 9.6 3.5 9.6 2.4 5.6 Z" fill="#fff"/><circle cx="7.4" cy="5.3" r="2.9" fill="#000"/><circle cx="6.5" cy="4.4" r="0.6" fill="#888"/></g></svg><svg style="position:absolute;left:1298px;top:136px;overflow:visible" width="14" height="14" viewBox="0 0 14 14"><path d="M7 1 V13 M1 7 H13" stroke="#f00000" stroke-width="3.2"/><path d="M7 1 V13 M1 7 H13" stroke="#b00000" stroke-width="0.5" opacity="0.4"/></svg><svg style="position:absolute;left:1358px;top:139.5px;overflow:visible" width="14" height="6" viewBox="0 0 14 6"><rect x="1" y="1.5" width="12" height="3.2" fill="#f00000"/></svg><svg style="position:absolute;left:1417px;top:134.5px;overflow:visible" width="17" height="17" viewBox="0 0 17 17"><path d="M13 1 L15 3 L4 13.5 L1 14.5 L2 11.5 Z" fill="#f0b030" stroke="#9a6a10" stroke-width="0.8"/><path d="M12.2 1.8 L14.2 3.8" stroke="#e0503a" stroke-width="2"/><path d="M1 14.5 L2 11.5 L4 13.5 Z" fill="#444"/></svg><div style="position:absolute;left:1161px;top:163px;width:16px;height:9px;background:#fff;border:1px solid #000;box-sizing:border-box"></div><div style="position:absolute;left:1183px;top:160px;font-size:13px;line-height:13px;color:#000;white-space:nowrap;">0</div><svg style="position:absolute;left:1415.5px;top:160.5px;overflow:visible" width="15" height="13" viewBox="0 0 15 13"><path d="M0.3 6 C1.5 0.8 13.2 -0.2 14.7 5.8 C14.3 8.8 11.5 11 7.5 11 C3.5 11 1.2 9 0.3 6 Z" fill="#000"/><path d="M2.4 5.6 C3.6 3.2 11.2 3.2 12.5 5.6 C11.4 9.6 3.5 9.6 2.4 5.6 Z" fill="#fff"/><circle cx="7.4" cy="5.3" r="2.9" fill="#000"/><circle cx="6.5" cy="4.4" r="0.6" fill="#888"/></svg><svg style="position:absolute;left:1439.5px;top:160px;overflow:visible" width="11" height="14" viewBox="0 0 11 14"><path d="M2.1 7 V5 Q2.1 1 5.3 1 Q8.5 1 8.5 5 V7" fill="none" stroke="#b5b5b5" stroke-width="1.9"/><rect x="0.5" y="6.5" width="10" height="7.5" rx="0.8" fill="#b5b5b5"/></svg><div style="position:absolute;left:1161px;top:183px;width:16px;height:9px;background:#ff0000;border:1px solid #000;box-sizing:border-box"></div><div style="position:absolute;left:1183px;top:180px;font-size:13px;line-height:13px;color:#000;white-space:nowrap;">Center</div><svg style="position:absolute;left:1415.5px;top:180.5px;overflow:visible" width="15" height="13" viewBox="0 0 15 13"><path d="M0.3 6 C1.5 0.8 13.2 -0.2 14.7 5.8 C14.3 8.8 11.5 11 7.5 11 C3.5 11 1.2 9 0.3 6 Z" fill="#000"/><path d="M2.4 5.6 C3.6 3.2 11.2 3.2 12.5 5.6 C11.4 9.6 3.5 9.6 2.4 5.6 Z" fill="#fff"/><circle cx="7.4" cy="5.3" r="2.9" fill="#000"/><circle cx="6.5" cy="4.4" r="0.6" fill="#888"/></svg><svg style="position:absolute;left:1439.5px;top:180px;overflow:visible" width="11" height="14" viewBox="0 0 11 14"><path d="M2.1 7 V5 Q2.1 1 5.3 1 Q8.5 1 8.5 5 V7" fill="none" stroke="#b5b5b5" stroke-width="1.9"/><rect x="0.5" y="6.5" width="10" height="7.5" rx="0.8" fill="#b5b5b5"/></svg><div style="position:absolute;left:1161px;top:203px;width:16px;height:9px;background:#fff;border:1px solid #000;box-sizing:border-box"></div><div style="position:absolute;left:1183px;top:200px;font-size:13px;line-height:13px;color:#000;white-space:nowrap;">Defpoints</div><svg style="position:absolute;left:1415.5px;top:200.5px;overflow:visible" width="15" height="13" viewBox="0 0 15 13"><path d="M0.3 6 C1.5 0.8 13.2 -0.2 14.7 5.8 C14.3 8.8 11.5 11 7.5 11 C3.5 11 1.2 9 0.3 6 Z" fill="#000"/><path d="M2.4 5.6 C3.6 3.2 11.2 3.2 12.5 5.6 C11.4 9.6 3.5 9.6 2.4 5.6 Z" fill="#fff"/><circle cx="7.4" cy="5.3" r="2.9" fill="#000"/><circle cx="6.5" cy="4.4" r="0.6" fill="#888"/></svg><svg style="position:absolute;left:1439.5px;top:200px;overflow:visible" width="11" height="14" viewBox="0 0 11 14"><path d="M2.1 7 V5 Q2.1 1 5.3 1 Q8.5 1 8.5 5 V7" fill="none" stroke="#b5b5b5" stroke-width="1.9"/><rect x="0.5" y="6.5" width="10" height="7.5" rx="0.8" fill="#b5b5b5"/></svg><div style="position:absolute;left:1161px;top:223px;width:16px;height:9px;background:#0a8cff;border:1px solid #000;box-sizing:border-box"></div><div style="position:absolute;left:1183px;top:220px;font-size:13px;line-height:13px;color:#000;white-space:nowrap;">Dimensions</div><svg style="position:absolute;left:1415.5px;top:220.5px;overflow:visible" width="15" height="13" viewBox="0 0 15 13"><path d="M0.3 6 C1.5 0.8 13.2 -0.2 14.7 5.8 C14.3 8.8 11.5 11 7.5 11 C3.5 11 1.2 9 0.3 6 Z" fill="#000"/><path d="M2.4 5.6 C3.6 3.2 11.2 3.2 12.5 5.6 C11.4 9.6 3.5 9.6 2.4 5.6 Z" fill="#fff"/><circle cx="7.4" cy="5.3" r="2.9" fill="#000"/><circle cx="6.5" cy="4.4" r="0.6" fill="#888"/></svg><svg style="position:absolute;left:1439.5px;top:220px;overflow:visible" width="11" height="14" viewBox="0 0 11 14"><path d="M2.1 7 V5 Q2.1 1 5.3 1 Q8.5 1 8.5 5 V7" fill="none" stroke="#b5b5b5" stroke-width="1.9"/><rect x="0.5" y="6.5" width="10" height="7.5" rx="0.8" fill="#b5b5b5"/></svg><div style="position:absolute;left:1161px;top:243px;width:16px;height:9px;background:#000;border:1px solid #000;box-sizing:border-box"></div><div style="position:absolute;left:1183px;top:240px;font-size:13px;line-height:13px;color:#000;white-space:nowrap;">Hidden</div><svg style="position:absolute;left:1415.5px;top:240.5px;overflow:visible" width="15" height="13" viewBox="0 0 15 13"><path d="M0.3 6 C1.5 0.8 13.2 -0.2 14.7 5.8 C14.3 8.8 11.5 11 7.5 11 C3.5 11 1.2 9 0.3 6 Z" fill="#000"/><path d="M2.4 5.6 C3.6 3.2 11.2 3.2 12.5 5.6 C11.4 9.6 3.5 9.6 2.4 5.6 Z" fill="#fff"/><circle cx="7.4" cy="5.3" r="2.9" fill="#000"/><circle cx="6.5" cy="4.4" r="0.6" fill="#888"/></svg><svg style="position:absolute;left:1439.5px;top:240px;overflow:visible" width="11" height="14" viewBox="0 0 11 14"><path d="M2.1 7 V5 Q2.1 1 5.3 1 Q8.5 1 8.5 5 V7" fill="none" stroke="#b5b5b5" stroke-width="1.9"/><rect x="0.5" y="6.5" width="10" height="7.5" rx="0.8" fill="#b5b5b5"/></svg><svg style="position:absolute;left:1394px;top:179.5px;overflow:visible" width="16" height="16" viewBox="0 0 16 16"><path d="M13 1 L15 3 L4 13.5 L1 14.5 L2 11.5 Z" fill="#f0b030" stroke="#9a6a10" stroke-width="0.8"/><path d="M12.2 1.8 L14.2 3.8" stroke="#e0503a" stroke-width="2"/><path d="M1 14.5 L2 11.5 L4 13.5 Z" fill="#444"/></svg><div style="position:absolute;left:1455px;top:108px;width:45px;height:690px;background:linear-gradient(90deg,#f2f2f2 0%,#e6e6e6 8%,#d8d8d8 50%,#cbcbcb 95%,#bdbdbd 96.5%,#bdbdbd 100%)"></div><div style="position:absolute;left:1462px;top:116.5px;width:28px;height:1px;background:repeating-linear-gradient(90deg,#a0a0a0 0 1px,transparent 1px 6px)"></div><div style="position:absolute;left:1462px;top:116px;width:28px;height:1.8px;background:repeating-linear-gradient(90deg,#a0a0a0 0 1.8px,transparent 1.8px 6px)"></div><div style="position:absolute;left:1456.5px;top:120.5px;width:41.5px;height:42px;background:#b9b9b9;border-radius:5px"></div><svg style="position:absolute;left:1463px;top:127px;overflow:visible" width="28" height="28" viewBox="0 0 28 28"><rect x="0.5" y="0.5" width="27" height="27" fill="#fff" stroke="#000" stroke-width="1"/><rect x="0.5" y="0.5" width="27" height="4.5" fill="#000"/><rect x="1.5" y="1.5" width="3" height="3" fill="#fff"/><path d="M7 11 L19 7 V20 L7 24 Z" fill="#bbb" stroke="#555" stroke-width="0.8"/><path d="M9 10.5 L21 6.5 V19.5 L9 23.5 Z" fill="#ddd" stroke="#555" stroke-width="0.8"/><path d="M11 10 L23 6 V19 L11 23 Z" fill="#fff" stroke="#555" stroke-width="0.8"/><path d="M14 19 L18 10 L19 18 Z" fill="none" stroke="#e02020" stroke-width="0.9"/></svg><svg style="position:absolute;left:1463px;top:174.5px;overflow:visible" width="28" height="28" viewBox="0 0 28 28"><rect x="0.5" y="0.5" width="27" height="27" fill="#fff" stroke="#000" stroke-width="1"/><rect x="0.5" y="0.5" width="27" height="4.5" fill="#000"/><rect x="1.5" y="1.5" width="3" height="3" fill="#fff"/><rect x="6.5" y="10" width="12" height="9" fill="#efe6c0" stroke="#555" stroke-width="0.8"/><circle cx="17" cy="19" r="5" fill="#efe6c0" fill-opacity="0.8" stroke="#555" stroke-width="0.8"/></svg><svg style="position:absolute;left:1463px;top:220px;overflow:visible" width="28" height="28" viewBox="0 0 28 28"><rect x="0.5" y="0.5" width="27" height="27" fill="#fff" stroke="#000" stroke-width="1"/><rect x="0.5" y="0.5" width="27" height="4.5" fill="#000"/><rect x="1.5" y="1.5" width="3" height="3" fill="#fff"/><rect x="5" y="10" width="18" height="13" rx="2.5" fill="#f4f4f4" stroke="#b9c9e6" stroke-width="1"/></svg><div style="position:absolute;left:1460px;top:261px;width:33px;height:1px;background:repeating-linear-gradient(90deg,#8a8a8a 0 1px,transparent 1px 3px)"></div><svg style="position:absolute;left:1463px;top:276px;overflow:visible" width="28" height="28" viewBox="0 0 28 28"><rect x="0.5" y="0.5" width="27" height="27" fill="#fff" stroke="#000" stroke-width="1"/><rect x="0.5" y="0.5" width="27" height="4.5" fill="#000"/><rect x="1.5" y="1.5" width="3" height="3" fill="#fff"/><rect x="5" y="10" width="3.5" height="3" fill="#000"/><rect x="11" y="10" width="13" height="3" fill="#fff" stroke="#000" stroke-width="0.6"/><rect x="5" y="15" width="3.5" height="3" fill="#000"/><rect x="11" y="15" width="13" height="3" fill="#fff" stroke="#000" stroke-width="0.6"/><rect x="5" y="20" width="3.5" height="3" fill="#000"/><rect x="11" y="20" width="13" height="3" fill="#fff" stroke="#000" stroke-width="0.6"/></svg><svg style="position:absolute;left:1463px;top:322px;overflow:visible" width="28" height="28" viewBox="0 0 28 28"><rect x="0.5" y="0.5" width="27" height="27" fill="#fff" stroke="#000" stroke-width="1"/><rect x="0.5" y="0.5" width="27" height="4.5" fill="#000"/><rect x="1.5" y="1.5" width="3" height="3" fill="#fff"/><path d="M7 10 H21 L15.5 16 V24 L12.5 22 V16 Z" fill="#8a8a8a" stroke="#444" stroke-width="0.7"/><ellipse cx="14" cy="10.5" rx="7" ry="1.6" fill="#bbb"/></svg><svg style="position:absolute;left:1463px;top:368px;overflow:visible" width="28" height="28" viewBox="0 0 28 28"><rect x="0.5" y="0.5" width="27" height="27" fill="#fff" stroke="#000" stroke-width="1"/><rect x="0.5" y="0.5" width="27" height="4.5" fill="#000"/><rect x="1.5" y="1.5" width="3" height="3" fill="#fff"/><path d="M6 12 L10 13.5 V20.5 L6 22 Z" fill="#ddd" stroke="#444" stroke-width="0.7"/><rect x="10" y="13.5" width="10" height="7" fill="#9a9a9a" stroke="#444" stroke-width="0.7"/><path d="M4 17 H25" stroke="#e07070" stroke-width="0.6" stroke-dasharray="1 1"/></svg><div style="position:absolute;left:1460px;top:408px;width:33px;height:1px;background:repeating-linear-gradient(90deg,#8a8a8a 0 1px,transparent 1px 3px)"></div><div style="position:absolute;left:1456.5px;top:417.5px;width:41.5px;height:42px;background:#b9b9b9;border-radius:5px"></div><svg style="position:absolute;left:1463px;top:424px;overflow:visible" width="28" height="28" viewBox="0 0 28 28"><rect x="0.5" y="0.5" width="27" height="27" fill="#fff" stroke="#000" stroke-width="1"/><rect x="0.5" y="0.5" width="27" height="4.5" fill="#000"/><rect x="1.5" y="1.5" width="3" height="3" fill="#fff"/><path d="M4 9 H16 M4 12 H18 M4 15 H20 M4 18 H19" stroke="#888" stroke-width="0.8"/><path d="M0.5 22.5 H27.5" stroke="#000" stroke-width="0.7"/><path d="M3 25.2 H5 M9 25.2 H24" stroke="#555" stroke-width="0.8"/></svg><svg style="position:absolute;left:1463px;top:471px;overflow:visible" width="28" height="28" viewBox="0 0 28 28"><rect x="0.5" y="0.5" width="27" height="27" fill="#fff" stroke="#000" stroke-width="1"/><rect x="0.5" y="0.5" width="27" height="4.5" fill="#000"/><rect x="1.5" y="1.5" width="3" height="3" fill="#fff"/><rect x="8" y="9" width="12" height="15" rx="0.8" fill="#c58a2c" stroke="#8c5a14" stroke-width="0.7"/><rect x="9.5" y="11" width="9" height="11.5" fill="#f6f6f6"/><rect x="11" y="7.5" width="6" height="3" fill="#999"/></svg><div style="position:absolute;left:0px;top:797.5px;width:1500px;height:46.5px;background:#dcdcdc;border-top:1px solid #c6c6c6;box-sizing:border-box"></div><div style="position:absolute;left:2px;top:808px;font-size:9.2px;line-height:9.2px;color:#000;white-space:nowrap;letter-spacing:0.55px">47.3607,60.0448</div><div style="position:absolute;left:2px;top:828px;font-size:9.2px;line-height:9.2px;color:#000;white-space:nowrap;letter-spacing:0.55px">@47.3607,60.0448</div><div style="position:absolute;left:253px;top:802.5px;width:1px;height:39px;background:#8a8a8a"></div><div style="position:absolute;left:256px;top:808px;font-size:9.2px;line-height:9.2px;color:#000;white-space:nowrap;letter-spacing:0.55px">76.4749&lt;52°</div><div style="position:absolute;left:256px;top:828px;font-size:9.2px;line-height:9.2px;color:#000;white-space:nowrap;letter-spacing:0.55px">@76.4749&lt;52°</div><div style="position:absolute;left:506.5px;top:819px;width:6px;height:6px;background:#c4c4c4;border-radius:50%"></div><div style="position:absolute;left:572.5px;top:818px;font-size:9.2px;line-height:9.2px;color:#000;white-space:nowrap;letter-spacing:0.55px">Object of gebied selecteren</div><svg style="position:absolute;left:716px;top:805px;overflow:visible" width="20" height="32" viewBox="0 0 20 32"><path d="M10 1 Q1.5 1 1.5 10 V21 Q1.5 30.5 10 30.5 Q18.5 30.5 18.5 21 V10 Q18.5 1 10 1 Z" fill="#fff" stroke="#333" stroke-width="1"/><path d="M1.5 12.5 Q10 10 18.5 12.5" fill="none" stroke="#333" stroke-width="1"/><rect x="8.5" y="3" width="3" height="7" rx="1.5" fill="#fff" stroke="#333" stroke-width="0.9"/><path d="M10 10 V12" stroke="#333" stroke-width="0.9"/></svg><div style="position:absolute;left:940px;top:819px;width:6px;height:6px;background:#c4c4c4;border-radius:50%"></div><div style="position:absolute;left:949px;top:818px;font-size:9.2px;line-height:9.2px;color:#000;white-space:nowrap;letter-spacing:0.55px">Geen objecten geselecteerd.</div><div style="position:absolute;left:1269.3px;top:819px;width:6px;height:6px;background:#c4c4c4;border-radius:50%"></div><div style="position:absolute;left:917.5px;top:16px;width:3px;height:59px;background:rgba(238,80,80,0.22)"></div><div style="position:absolute;left:918.5px;top:16px;width:1.2px;height:59px;background:rgba(238,80,80,0.6)"></div><div style="position:absolute;left:959.5px;top:16px;width:3px;height:59px;background:rgba(238,80,80,0.22)"></div><div style="position:absolute;left:960.5px;top:16px;width:1.2px;height:59px;background:rgba(238,80,80,0.6)"></div><div style="position:absolute;left:910px;top:23.3px;width:59px;height:3px;background:rgba(238,80,80,0.22)"></div><div style="position:absolute;left:910px;top:24.3px;width:59px;height:1.2px;background:rgba(238,80,80,0.6)"></div><div style="position:absolute;left:910px;top:65.0px;width:59px;height:3px;background:rgba(238,80,80,0.22)"></div><div style="position:absolute;left:910px;top:66.0px;width:59px;height:1.2px;background:rgba(238,80,80,0.6)"></div><svg style="position:absolute;left:908px;top:14px;overflow:visible" width="84" height="84" viewBox="0 0 84 84"><circle cx="42" cy="42" r="37" fill="rgba(190,205,225,0.07)" stroke="rgba(150,175,205,0.45)" stroke-width="2"/><circle cx="42" cy="42" r="35" fill="none" stroke="rgba(170,190,215,0.35)" stroke-width="2.5"/><circle cx="42" cy="42" r="32.5" fill="none" stroke="rgba(200,215,232,0.35)" stroke-width="2.5"/></svg><svg style="position:absolute;left:949px;top:55px;overflow:visible" width="20" height="30" viewBox="0 0 20 30"><path d="M1 1 L1 24 L6.5 18.5 L10.5 27.5 L14.5 25.8 L10.5 17 L18 17 Z" fill="#fff" stroke="#000" stroke-width="1.4" stroke-linejoin="round"/></svg></body></html>
